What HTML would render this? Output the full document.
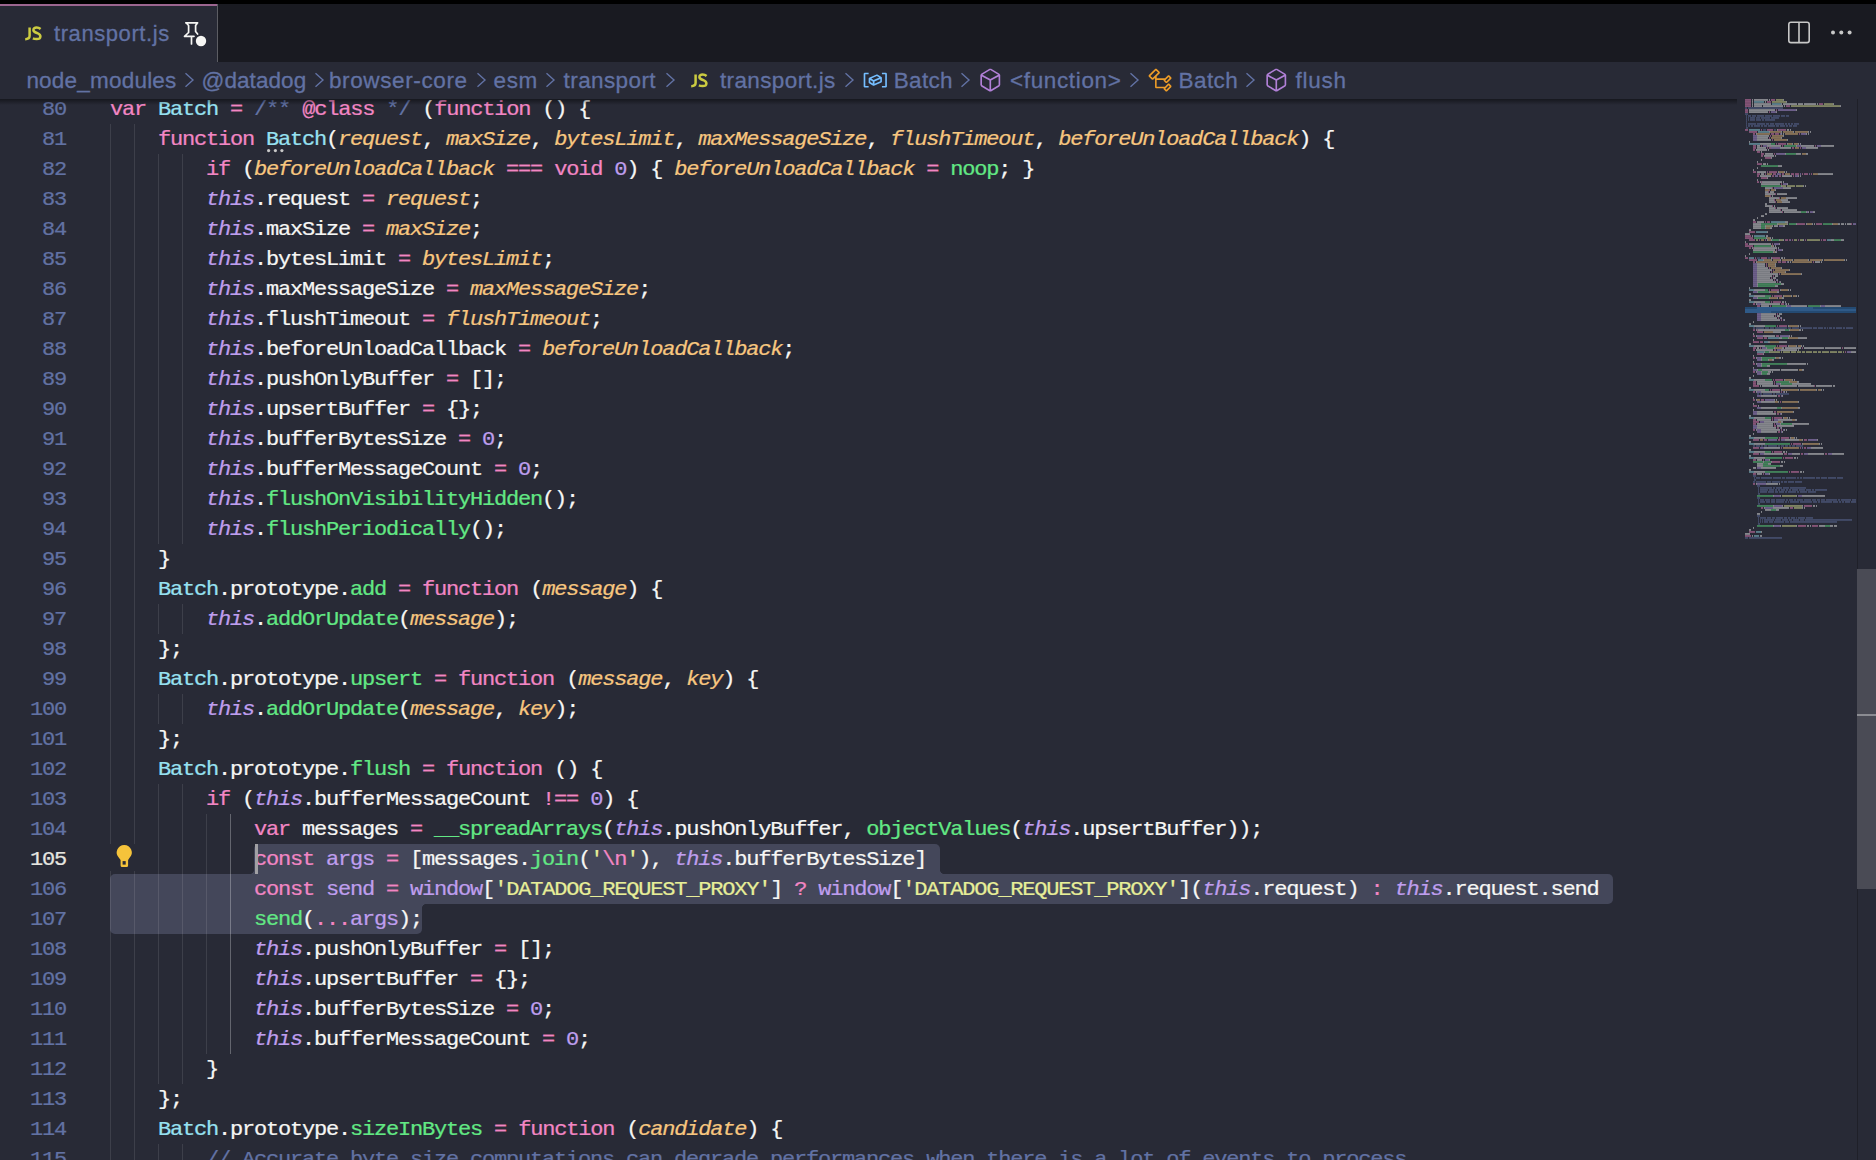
<!DOCTYPE html>
<html><head><meta charset="utf-8"><title>transport.js</title>
<style>
html,body{margin:0;padding:0}
body{width:1876px;height:1160px;overflow:hidden;background:#282A36;position:relative;font-family:"Liberation Sans",sans-serif}
.abs{position:absolute}
#topbar{left:0;top:0;width:1876px;height:4px;background:#000}
#tabs{left:0;top:4px;width:1876px;height:58px;background:#191A21}
#tab{left:0;top:0;width:217px;height:58px;background:#282A36}
#tabborder{left:0;top:0;width:217px;height:2px;background:#9C6690}
#tabsep{left:217px;top:0;width:1px;height:58px;background:#5c5d63}
#tabjs{left:25px;top:20px;font:bold 16px/20px "Liberation Sans",sans-serif;color:#CBCB41;letter-spacing:-0.5px;transform:scaleX(.88);transform-origin:0 0}
#tabname{left:54px;top:14.5px;-webkit-text-stroke:0.3px currentColor;letter-spacing:0.58px;font:22px/30px "Liberation Sans",sans-serif;color:#6272A4;white-space:pre}
#crumbs{left:0;top:62px;width:1876px;height:37px;background:#282A36;z-index:5}
#crumbs .t{position:absolute;top:4px;-webkit-text-stroke:0.3px currentColor;font:22.5px/30px "Liberation Sans",sans-serif;color:#6272A4;white-space:pre}
#shadow{left:0;top:99px;width:1737px;height:6px;background:linear-gradient(rgba(0,0,0,.45),rgba(0,0,0,0));z-index:5}
.ln{-webkit-text-stroke:0.25px currentColor;position:absolute;font:22px/30px "Liberation Mono",monospace;letter-spacing:-1.2px;white-space:pre;color:#F6F6F4;height:30px;z-index:3;transform:translateY(1.2px) scaleY(0.95);transform-origin:0 22.6px}
.num{-webkit-text-stroke:0.25px currentColor;position:absolute;left:0;width:66px;text-align:right;font:22px/30px "Liberation Mono",monospace;letter-spacing:-1.2px;color:#6272A4;z-index:3;transform:translateY(1.2px) scaleY(0.95);transform-origin:0 22.6px}
.num.act{color:#E6E6E0}
.g{position:absolute;width:1px;background:rgba(255,255,255,.1);z-index:2}
.ga{background:rgba(255,255,255,.28)}
.k{color:#F286C4}.c{color:#97E1F1}.p{color:#F7C67F;font-style:italic}.t{color:#BF9EEE;font-style:italic}
.v{color:#BF9EEE}.f{color:#62E884}.s{color:#E7EE98}.m{color:#6272A4}
.sel{position:absolute;background:#44475A;z-index:1}
#minimap{left:1745px;top:99px;width:111px;height:1062px;z-index:1}
#sbline{left:1857px;top:99px;width:1px;height:1062px;background:#1f2029;z-index:4}
#slider{left:1857px;top:569px;width:19px;height:320px;background:#4A4B55;z-index:4}
#cursormark{left:1857px;top:714px;width:19px;height:2px;background:#8b8c92;z-index:4}
</style></head><body>
<div id="topbar" class="abs"></div>
<div id="tabs" class="abs">
  <div id="tab" class="abs">
    <div id="tabborder" class="abs"></div>
    <svg class="abs" style="left:20px;top:15px" width="26" height="26" viewBox="0 0 26 26"><path d="M9.6 8.6 V16.8 C9.6 19.4 8.2 20.2 5.2 20.2" fill="none" stroke="#CBCB41" stroke-width="2.5"/><path d="M20.6 10 C19.4 9 18 8.5 16.6 8.5 C14.6 8.5 13.3 9.5 13.4 11.1 C13.5 12.8 15.4 13.4 17.4 14.2 C19.4 15 20.5 16 20.4 17.7 C20.3 19.4 18.7 20.1 16.6 20.1 C15.2 20.1 13.9 19.9 12.9 19.4" fill="none" stroke="#CBCB41" stroke-width="2.5"/></svg>
    <div id="tabname" class="abs">transport.js</div>
    <svg class="abs" style="left:180px;top:14px" width="30" height="30" viewBox="0 0 30 30">
      <path d="M5.8 4.8 H17.6 M6.3 5 L8.6 7.5 V14.5 L4.5 18.3 H14 M17.4 5 L15.6 7.5 V13.5 L17.6 16 M11.5 18.3 V26" fill="none" stroke="#F6F6F4" stroke-width="1.7" stroke-linejoin="round" stroke-linecap="round"/>
      <circle cx="21" cy="23" r="5.2" fill="#F6F6F4"/>
    </svg>
  </div>
  <div id="tabsep" class="abs"></div>
  <svg class="abs" style="left:1786px;top:14.5px" width="26" height="26" viewBox="0 0 26 26">
    <rect x="2.8" y="3.2" width="20.4" height="20.4" rx="2.2" fill="none" stroke="#C8C8C8" stroke-width="1.6"/>
    <line x1="13" y1="3.2" x2="13" y2="23.6" stroke="#C8C8C8" stroke-width="1.6"/>
  </svg>
  <svg class="abs" style="left:1826px;top:20.2px" width="30" height="16" viewBox="0 0 30 16">
    <circle cx="7" cy="8.6" r="2" fill="#C8C8C8"/><circle cx="15.3" cy="8.6" r="2" fill="#C8C8C8"/><circle cx="23.6" cy="8.6" r="2" fill="#C8C8C8"/>
  </svg>
</div>
<div id="crumbs" class="abs">
<div class="t" style="left:26.4px;letter-spacing:0.21px">node_modules</div>
<svg class="abs" style="left:183px;top:9px" width="12" height="18" viewBox="0 0 12 18"><path d="M2.5 2.2 L10 9 L2.5 15.8" fill="none" stroke="#6272A4" stroke-width="1.4"/></svg>
<div class="t" style="left:201.5px;letter-spacing:0.07px">@datadog</div>
<svg class="abs" style="left:313px;top:9px" width="12" height="18" viewBox="0 0 12 18"><path d="M2.5 2.2 L10 9 L2.5 15.8" fill="none" stroke="#6272A4" stroke-width="1.4"/></svg>
<div class="t" style="left:329.0px;letter-spacing:0.61px">browser-core</div>
<svg class="abs" style="left:475px;top:9px" width="12" height="18" viewBox="0 0 12 18"><path d="M2.5 2.2 L10 9 L2.5 15.8" fill="none" stroke="#6272A4" stroke-width="1.4"/></svg>
<div class="t" style="left:493.5px;letter-spacing:0.65px">esm</div>
<svg class="abs" style="left:544px;top:9px" width="12" height="18" viewBox="0 0 12 18"><path d="M2.5 2.2 L10 9 L2.5 15.8" fill="none" stroke="#6272A4" stroke-width="1.4"/></svg>
<div class="t" style="left:563.6px;letter-spacing:0.40px">transport</div>
<svg class="abs" style="left:664px;top:9px" width="12" height="18" viewBox="0 0 12 18"><path d="M2.5 2.2 L10 9 L2.5 15.8" fill="none" stroke="#6272A4" stroke-width="1.4"/></svg>
<svg class="abs" style="left:686px;top:65.5px;top:3.5px" width="26" height="26" viewBox="0 0 26 26"><path d="M9.6 8.6 V16.8 C9.6 19.4 8.2 20.2 5.2 20.2" fill="none" stroke="#CBCB41" stroke-width="2.5"/><path d="M20.6 10 C19.4 9 18 8.5 16.6 8.5 C14.6 8.5 13.3 9.5 13.4 11.1 C13.5 12.8 15.4 13.4 17.4 14.2 C19.4 15 20.5 16 20.4 17.7 C20.3 19.4 18.7 20.1 16.6 20.1 C15.2 20.1 13.9 19.9 12.9 19.4" fill="none" stroke="#CBCB41" stroke-width="2.5"/></svg>
<div class="t" style="left:720.0px;letter-spacing:0.37px">transport.js</div>
<svg class="abs" style="left:843px;top:9px" width="12" height="18" viewBox="0 0 12 18"><path d="M2.5 2.2 L10 9 L2.5 15.8" fill="none" stroke="#6272A4" stroke-width="1.4"/></svg>
<svg class="abs" style="left:861.7px;top:4.3px" width="26.56" height="26.56" viewBox="0 0 16 16"><path fill="#75BEFF" d="M2 5h2V4H1.5l-.5.5v8l.5.5H4v-1H2V5zm12.5-1H12v1h2v7h-2v1h2.5l.5-.5v-8l-.5-.5zm-2.74 2.57L12 7v2.51l-.3.45-4.5 2h-.46l-2.5-1.5-.24-.43v-2.5l.3-.46 4.5-2h.46l2.5 1.5zM5 9.71l1.5.9V9.28L5 8.38v1.33zm.58-2.15l1.45.87 3.39-1.5-1.45-.87-3.39 1.5zm1.95 3.17l3.5-1.56v-1.4l-3.5 1.55v1.41z"/></svg>
<div class="t" style="left:893.8px;letter-spacing:0.30px">Batch</div>
<svg class="abs" style="left:959px;top:9px" width="12" height="18" viewBox="0 0 12 18"><path d="M2.5 2.2 L10 9 L2.5 15.8" fill="none" stroke="#6272A4" stroke-width="1.4"/></svg>
<svg class="abs" style="left:977.4px;top:4.6px" width="26.56" height="26.56" viewBox="0 0 16 16"><path fill="#B180D7" d="M13.51 4l-5-3h-1l-5 3-.49.86v6l.49.85 5 3h1l5-3 .49-.85v-6L13.51 4zm-6 9.56l-4.5-2.7V5.7l4.5 2.45v5.41zM3.27 4.7l4.74-2.84 4.74 2.84-4.74 2.59L3.27 4.7zm9.74 6.16l-4.5 2.7V8.15l4.5-2.45v5.16z"/></svg>
<div class="t" style="left:1010.0px;letter-spacing:0.64px">&lt;function&gt;</div>
<svg class="abs" style="left:1128px;top:9px" width="12" height="18" viewBox="0 0 12 18"><path d="M2.5 2.2 L10 9 L2.5 15.8" fill="none" stroke="#6272A4" stroke-width="1.4"/></svg>
<svg class="abs" style="left:1147px;top:4.6px" width="26.56" height="26.56" viewBox="0 0 16 16"><path fill="#EE9D28" d="M11.34 9.71h.71l2.67-2.67v-.71L13.38 5h-.7l-1.82 1.81h-5V5.56l1.86-1.85V3l-2-2H5L1 5v.71l2 2h.71l1.14-1.15v5.79l.5.5H10v.52l1.330 1.34h.71l2.67-2.67v-.71L13.37 10h-.7l-1.86 1.85h-5v-4H10v.48l1.34 1.38zm1.69-3.65l.63.63-2 2-.63-.63 2-2zm0 5l.63.63-2 2-.63-.63 2-2zM3.35 6.65l-1.29-1.3 3.290-3.29 1.3 1.29-3.3 3.3z"/></svg>
<div class="t" style="left:1178.5px;letter-spacing:0.45px">Batch</div>
<svg class="abs" style="left:1244px;top:9px" width="12" height="18" viewBox="0 0 12 18"><path d="M2.5 2.2 L10 9 L2.5 15.8" fill="none" stroke="#6272A4" stroke-width="1.4"/></svg>
<svg class="abs" style="left:1262.6px;top:4.6px" width="26.56" height="26.56" viewBox="0 0 16 16"><path fill="#B180D7" d="M13.51 4l-5-3h-1l-5 3-.49.86v6l.49.85 5 3h1l5-3 .49-.85v-6L13.51 4zm-6 9.56l-4.5-2.7V5.7l4.5 2.45v5.41zM3.27 4.7l4.74-2.84 4.74 2.84-4.74 2.59L3.27 4.7zm9.74 6.16l-4.5 2.7V8.15l4.5-2.45v5.16z"/></svg>
<div class="t" style="left:1295.5px;letter-spacing:0.75px">flush</div>
</div>
<div id="shadow" class="abs"></div>

<div class="sel" style="left:254px;top:844px;width:686px;height:30px;border-radius:5px 5px 0 0"></div>
<div class="sel" style="left:110px;top:874px;width:1503px;height:30px;border-radius:5px 5px 5px 0"></div>
<div class="sel" style="left:110px;top:904px;width:312px;height:30px;border-radius:0 0 5px 5px"></div>
<div class="sel" style="left:249px;top:869px;width:5px;height:5px;background:radial-gradient(circle at 0 0,transparent 5px,#44475A 5.5px)"></div>
<div class="sel" style="left:940px;top:869px;width:5px;height:5px;background:radial-gradient(circle at 100% 0,transparent 5px,#44475A 5.5px)"></div>
<div class="sel" style="left:422px;top:904px;width:5px;height:5px;background:radial-gradient(circle at 100% 100%,transparent 5px,#44475A 5.5px)"></div>
<div class="abs" style="left:255px;top:844px;width:3px;height:30px;background:#A0A0A4;z-index:4"></div>
<div class="abs" style="left:110px;top:844px;width:26px;height:27px;background:#282A36;z-index:3"></div>
<svg class="abs" style="left:114px;top:843px;z-index:4" width="20" height="26" viewBox="0 0 20 26">
<path d="M10.25 1.9 A7.6 7.6 0 0 1 15.6 14.8 L14.1 17 V22.5 Q14.1 24 12.6 24 H8.1 Q6.6 24 6.6 22.5 V17 L4.9 14.8 A7.6 7.6 0 0 1 10.25 1.9 Z" fill="#F5C33B"/>
<rect x="8.6" y="18.1" width="3.1" height="3.5" fill="#282A36"/>
</svg>
<svg class="abs" style="left:265px;top:147px;z-index:4" width="20" height="8" viewBox="0 0 20 8"><circle cx="3.6" cy="3.6" r="1.6" fill="#C8C8C8"/><circle cx="10.4" cy="3.6" r="1.6" fill="#C8C8C8"/><circle cx="16.9" cy="3.6" r="1.6" fill="#C8C8C8"/></svg>

<div class="g" style="left:110px;top:124px;height:1050px"></div>
<div class="g" style="left:134px;top:124px;height:1050px"></div>
<div class="g" style="left:158px;top:154px;height:390px"></div>
<div class="g" style="left:158px;top:604px;height:30px"></div>
<div class="g" style="left:158px;top:694px;height:30px"></div>
<div class="g" style="left:158px;top:784px;height:300px"></div>
<div class="g" style="left:158px;top:1144px;height:30px"></div>
<div class="g" style="left:182px;top:154px;height:390px"></div>
<div class="g" style="left:182px;top:604px;height:30px"></div>
<div class="g" style="left:182px;top:694px;height:30px"></div>
<div class="g" style="left:182px;top:784px;height:300px"></div>
<div class="g" style="left:182px;top:1144px;height:30px"></div>
<div class="g" style="left:206px;top:814px;height:240px"></div>
<div class="g ga" style="left:230px;top:814px;height:240px"></div>
<div class="num" style="top:94px">80</div>
<div class="num" style="top:124px">81</div>
<div class="num" style="top:154px">82</div>
<div class="num" style="top:184px">83</div>
<div class="num" style="top:214px">84</div>
<div class="num" style="top:244px">85</div>
<div class="num" style="top:274px">86</div>
<div class="num" style="top:304px">87</div>
<div class="num" style="top:334px">88</div>
<div class="num" style="top:364px">89</div>
<div class="num" style="top:394px">90</div>
<div class="num" style="top:424px">91</div>
<div class="num" style="top:454px">92</div>
<div class="num" style="top:484px">93</div>
<div class="num" style="top:514px">94</div>
<div class="num" style="top:544px">95</div>
<div class="num" style="top:574px">96</div>
<div class="num" style="top:604px">97</div>
<div class="num" style="top:634px">98</div>
<div class="num" style="top:664px">99</div>
<div class="num" style="top:694px">100</div>
<div class="num" style="top:724px">101</div>
<div class="num" style="top:754px">102</div>
<div class="num" style="top:784px">103</div>
<div class="num" style="top:814px">104</div>
<div class="num act" style="top:844px">105</div>
<div class="num" style="top:874px">106</div>
<div class="num" style="top:904px">107</div>
<div class="num" style="top:934px">108</div>
<div class="num" style="top:964px">109</div>
<div class="num" style="top:994px">110</div>
<div class="num" style="top:1024px">111</div>
<div class="num" style="top:1054px">112</div>
<div class="num" style="top:1084px">113</div>
<div class="num" style="top:1114px">114</div>
<div class="num" style="top:1144px">115</div>
<div class="ln" style="top:94px;left:110px"><span class="k">var</span> <span class="c">Batch</span> <span class="k">=</span> <span class="m">/**</span> <span class="k">@class</span> <span class="m">*/</span> (<span class="k">function</span> () {</div>
<div class="ln" style="top:124px;left:158px"><span class="k">function</span> <span class="c">Batch</span>(<span class="p">request</span>, <span class="p">maxSize</span>, <span class="p">bytesLimit</span>, <span class="p">maxMessageSize</span>, <span class="p">flushTimeout</span>, <span class="p">beforeUnloadCallback</span>) {</div>
<div class="ln" style="top:154px;left:206px"><span class="k">if</span> (<span class="p">beforeUnloadCallback</span> <span class="k">===</span> <span class="k">void</span> <span class="v">0</span>) { <span class="p">beforeUnloadCallback</span> <span class="k">=</span> <span class="f">noop</span>; }</div>
<div class="ln" style="top:184px;left:206px"><span class="t">this</span>.request <span class="k">=</span> <span class="p">request</span>;</div>
<div class="ln" style="top:214px;left:206px"><span class="t">this</span>.maxSize <span class="k">=</span> <span class="p">maxSize</span>;</div>
<div class="ln" style="top:244px;left:206px"><span class="t">this</span>.bytesLimit <span class="k">=</span> <span class="p">bytesLimit</span>;</div>
<div class="ln" style="top:274px;left:206px"><span class="t">this</span>.maxMessageSize <span class="k">=</span> <span class="p">maxMessageSize</span>;</div>
<div class="ln" style="top:304px;left:206px"><span class="t">this</span>.flushTimeout <span class="k">=</span> <span class="p">flushTimeout</span>;</div>
<div class="ln" style="top:334px;left:206px"><span class="t">this</span>.beforeUnloadCallback <span class="k">=</span> <span class="p">beforeUnloadCallback</span>;</div>
<div class="ln" style="top:364px;left:206px"><span class="t">this</span>.pushOnlyBuffer <span class="k">=</span> [];</div>
<div class="ln" style="top:394px;left:206px"><span class="t">this</span>.upsertBuffer <span class="k">=</span> {};</div>
<div class="ln" style="top:424px;left:206px"><span class="t">this</span>.bufferBytesSize <span class="k">=</span> <span class="v">0</span>;</div>
<div class="ln" style="top:454px;left:206px"><span class="t">this</span>.bufferMessageCount <span class="k">=</span> <span class="v">0</span>;</div>
<div class="ln" style="top:484px;left:206px"><span class="t">this</span>.<span class="f">flushOnVisibilityHidden</span>();</div>
<div class="ln" style="top:514px;left:206px"><span class="t">this</span>.<span class="f">flushPeriodically</span>();</div>
<div class="ln" style="top:544px;left:158px">}</div>
<div class="ln" style="top:574px;left:158px"><span class="c">Batch</span>.prototype.<span class="f">add</span> <span class="k">=</span> <span class="k">function</span> (<span class="p">message</span>) {</div>
<div class="ln" style="top:604px;left:206px"><span class="t">this</span>.<span class="f">addOrUpdate</span>(<span class="p">message</span>);</div>
<div class="ln" style="top:634px;left:158px">};</div>
<div class="ln" style="top:664px;left:158px"><span class="c">Batch</span>.prototype.<span class="f">upsert</span> <span class="k">=</span> <span class="k">function</span> (<span class="p">message</span>, <span class="p">key</span>) {</div>
<div class="ln" style="top:694px;left:206px"><span class="t">this</span>.<span class="f">addOrUpdate</span>(<span class="p">message</span>, <span class="p">key</span>);</div>
<div class="ln" style="top:724px;left:158px">};</div>
<div class="ln" style="top:754px;left:158px"><span class="c">Batch</span>.prototype.<span class="f">flush</span> <span class="k">=</span> <span class="k">function</span> () {</div>
<div class="ln" style="top:784px;left:206px"><span class="k">if</span> (<span class="t">this</span>.bufferMessageCount <span class="k">!==</span> <span class="v">0</span>) {</div>
<div class="ln" style="top:814px;left:254px"><span class="k">var</span> messages <span class="k">=</span> <span class="f">__spreadArrays</span>(<span class="t">this</span>.pushOnlyBuffer, <span class="f">objectValues</span>(<span class="t">this</span>.upsertBuffer));</div>
<div class="ln" style="top:844px;left:254px"><span class="k">const</span> <span class="v">args</span> <span class="k">=</span> [messages.<span class="f">join</span>(<span class="s">&#x27;</span><span class="k">\n</span><span class="s">&#x27;</span>), <span class="t">this</span>.bufferBytesSize]</div>
<div class="ln" style="top:874px;left:254px"><span class="k">const</span> <span class="v">send</span> <span class="k">=</span> <span class="v">window</span>[<span class="s">&#x27;DATADOG_REQUEST_PROXY&#x27;</span>] <span class="k">?</span> <span class="v">window</span>[<span class="s">&#x27;DATADOG_REQUEST_PROXY&#x27;</span>](<span class="t">this</span>.request) <span class="k">:</span> <span class="t">this</span>.request.send</div>
<div class="ln" style="top:904px;left:254px"><span class="f">send</span>(<span class="k">...</span><span class="v">args</span>);</div>
<div class="ln" style="top:934px;left:254px"><span class="t">this</span>.pushOnlyBuffer <span class="k">=</span> [];</div>
<div class="ln" style="top:964px;left:254px"><span class="t">this</span>.upsertBuffer <span class="k">=</span> {};</div>
<div class="ln" style="top:994px;left:254px"><span class="t">this</span>.bufferBytesSize <span class="k">=</span> <span class="v">0</span>;</div>
<div class="ln" style="top:1024px;left:254px"><span class="t">this</span>.bufferMessageCount <span class="k">=</span> <span class="v">0</span>;</div>
<div class="ln" style="top:1054px;left:206px">}</div>
<div class="ln" style="top:1084px;left:158px">};</div>
<div class="ln" style="top:1114px;left:158px"><span class="c">Batch</span>.prototype.<span class="f">sizeInBytes</span> <span class="k">=</span> <span class="k">function</span> (<span class="p">candidate</span>) {</div>
<div class="ln" style="top:1144px;left:206px"><span class="m">// Accurate byte size computations can degrade performances when there is a lot of events to process</span></div>
<div id="minimap" class="abs"><svg width="111" height="1062" viewBox="0 0 111 1062" style="position:absolute;left:0;top:0"><g opacity="0.5"><rect x="0" y="0.1" width="6" height="1.7" fill="#F286C4"/><rect x="7" y="0.1" width="1" height="1.7" fill="#F6F6F4"/><rect x="9" y="0.1" width="14" height="1.7" fill="#F6F6F4"/><rect x="24" y="0.1" width="1" height="1.7" fill="#F6F6F4"/><rect x="26" y="0.1" width="4" height="1.7" fill="#F286C4"/><rect x="31" y="0.1" width="7" height="1.7" fill="#E7EE98"/><rect x="38" y="0.1" width="1" height="1.7" fill="#F6F6F4"/><rect x="0" y="2.1" width="6" height="1.7" fill="#F286C4"/><rect x="7" y="2.1" width="1" height="1.7" fill="#F6F6F4"/><rect x="9" y="2.1" width="10" height="1.7" fill="#97E1F1"/><rect x="20" y="2.1" width="1" height="1.7" fill="#F6F6F4"/><rect x="22" y="2.1" width="4" height="1.7" fill="#F286C4"/><rect x="27" y="2.1" width="14" height="1.7" fill="#E7EE98"/><rect x="41" y="2.1" width="1" height="1.7" fill="#F6F6F4"/><rect x="0" y="4.2" width="6" height="1.7" fill="#F286C4"/><rect x="7" y="4.2" width="1" height="1.7" fill="#F6F6F4"/><rect x="9" y="4.2" width="17" height="1.7" fill="#F6F6F4"/><rect x="27" y="4.2" width="9" height="1.7" fill="#97E1F1"/><rect x="36" y="4.2" width="1" height="1.7" fill="#F6F6F4"/><rect x="38" y="4.2" width="14" height="1.7" fill="#F6F6F4"/><rect x="53" y="4.2" width="5" height="1.7" fill="#F6F6F4"/><rect x="59" y="4.2" width="12" height="1.7" fill="#F6F6F4"/><rect x="72" y="4.2" width="1" height="1.7" fill="#F6F6F4"/><rect x="74" y="4.2" width="4" height="1.7" fill="#F286C4"/><rect x="79" y="4.2" width="9" height="1.7" fill="#E7EE98"/><rect x="88" y="4.2" width="1" height="1.7" fill="#F6F6F4"/><rect x="0" y="6.2" width="6" height="1.7" fill="#F286C4"/><rect x="7" y="6.2" width="1" height="1.7" fill="#F6F6F4"/><rect x="9" y="6.2" width="8" height="1.7" fill="#F6F6F4"/><rect x="18" y="6.2" width="20" height="1.7" fill="#F6F6F4"/><rect x="39" y="6.2" width="1" height="1.7" fill="#F6F6F4"/><rect x="41" y="6.2" width="4" height="1.7" fill="#F286C4"/><rect x="46" y="6.2" width="49" height="1.7" fill="#E7EE98"/><rect x="95" y="6.2" width="1" height="1.7" fill="#F6F6F4"/><rect x="0" y="8.2" width="2" height="1.7" fill="#6272A4"/><rect x="3" y="8.2" width="35" height="1.7" fill="#6272A4"/><rect x="0" y="10.2" width="3" height="1.7" fill="#F286C4"/><rect x="4" y="10.2" width="26" height="1.7" fill="#F6F6F4"/><rect x="31" y="10.2" width="1" height="1.7" fill="#F286C4"/><rect x="33" y="10.2" width="18" height="1.7" fill="#BF9EEE"/><rect x="51" y="10.2" width="1" height="1.7" fill="#F6F6F4"/><rect x="0" y="12.2" width="3" height="1.7" fill="#F286C4"/><rect x="4" y="12.2" width="19" height="1.7" fill="#F6F6F4"/><rect x="24" y="12.2" width="1" height="1.7" fill="#F286C4"/><rect x="26" y="12.2" width="5" height="1.7" fill="#BF9EEE"/><rect x="31" y="12.2" width="1" height="1.7" fill="#F6F6F4"/><rect x="0" y="14.2" width="3" height="1.7" fill="#6272A4"/><rect x="1" y="16.1" width="1" height="1.7" fill="#6272A4"/><rect x="3" y="16.1" width="3" height="1.7" fill="#6272A4"/><rect x="7" y="16.1" width="4" height="1.7" fill="#6272A4"/><rect x="12" y="16.1" width="7" height="1.7" fill="#6272A4"/><rect x="20" y="16.1" width="7" height="1.7" fill="#6272A4"/><rect x="28" y="16.1" width="7" height="1.7" fill="#6272A4"/><rect x="36" y="16.1" width="4" height="1.7" fill="#6272A4"/><rect x="41" y="16.1" width="3" height="1.7" fill="#6272A4"/><rect x="1" y="18.1" width="1" height="1.7" fill="#6272A4"/><rect x="3" y="18.1" width="1" height="1.7" fill="#6272A4"/><rect x="5" y="18.1" width="5" height="1.7" fill="#6272A4"/><rect x="11" y="18.1" width="4" height="1.7" fill="#6272A4"/><rect x="16" y="18.1" width="9" height="1.7" fill="#6272A4"/><rect x="26" y="18.1" width="8" height="1.7" fill="#6272A4"/><rect x="1" y="20.1" width="1" height="1.7" fill="#6272A4"/><rect x="3" y="20.1" width="1" height="1.7" fill="#6272A4"/><rect x="5" y="20.1" width="5" height="1.7" fill="#6272A4"/><rect x="11" y="20.1" width="5" height="1.7" fill="#6272A4"/><rect x="17" y="20.1" width="2" height="1.7" fill="#6272A4"/><rect x="20" y="20.1" width="10" height="1.7" fill="#6272A4"/><rect x="1" y="22.1" width="1" height="1.7" fill="#6272A4"/><rect x="1" y="24.1" width="1" height="1.7" fill="#6272A4"/><rect x="3" y="24.1" width="8" height="1.7" fill="#6272A4"/><rect x="12" y="24.1" width="8" height="1.7" fill="#6272A4"/><rect x="21" y="24.1" width="3" height="1.7" fill="#6272A4"/><rect x="25" y="24.1" width="4" height="1.7" fill="#6272A4"/><rect x="30" y="24.1" width="9" height="1.7" fill="#6272A4"/><rect x="40" y="24.1" width="2" height="1.7" fill="#6272A4"/><rect x="43" y="24.1" width="2" height="1.7" fill="#6272A4"/><rect x="46" y="24.1" width="2" height="1.7" fill="#6272A4"/><rect x="49" y="24.1" width="5" height="1.7" fill="#6272A4"/><rect x="1" y="26.1" width="1" height="1.7" fill="#6272A4"/><rect x="3" y="26.1" width="2" height="1.7" fill="#6272A4"/><rect x="6" y="26.1" width="2" height="1.7" fill="#6272A4"/><rect x="9" y="26.1" width="6" height="1.7" fill="#6272A4"/><rect x="16" y="26.1" width="2" height="1.7" fill="#6272A4"/><rect x="19" y="26.1" width="3" height="1.7" fill="#6272A4"/><rect x="23" y="26.1" width="7" height="1.7" fill="#6272A4"/><rect x="31" y="26.1" width="3" height="1.7" fill="#6272A4"/><rect x="35" y="26.1" width="5" height="1.7" fill="#6272A4"/><rect x="41" y="26.1" width="2" height="1.7" fill="#6272A4"/><rect x="44" y="26.1" width="3" height="1.7" fill="#6272A4"/><rect x="48" y="26.1" width="4" height="1.7" fill="#6272A4"/><rect x="1" y="28.1" width="2" height="1.7" fill="#6272A4"/><rect x="0" y="30.1" width="3" height="1.7" fill="#F286C4"/><rect x="4" y="30.1" width="11" height="1.7" fill="#97E1F1"/><rect x="16" y="30.1" width="1" height="1.7" fill="#F286C4"/><rect x="18" y="30.1" width="3" height="1.7" fill="#6272A4"/><rect x="22" y="30.1" width="6" height="1.7" fill="#F286C4"/><rect x="29" y="30.1" width="2" height="1.7" fill="#6272A4"/><rect x="32" y="30.1" width="1" height="1.7" fill="#F6F6F4"/><rect x="33" y="30.1" width="8" height="1.7" fill="#F286C4"/><rect x="42" y="30.1" width="2" height="1.7" fill="#F6F6F4"/><rect x="45" y="30.1" width="1" height="1.7" fill="#F6F6F4"/><rect x="4" y="32.1" width="8" height="1.7" fill="#F286C4"/><rect x="13" y="32.1" width="11" height="1.7" fill="#97E1F1"/><rect x="24" y="32.1" width="1" height="1.7" fill="#F6F6F4"/><rect x="25" y="32.1" width="11" height="1.7" fill="#F7C67F"/><rect x="36" y="32.1" width="1" height="1.7" fill="#F6F6F4"/><rect x="38" y="32.1" width="10" height="1.7" fill="#F7C67F"/><rect x="48" y="32.1" width="1" height="1.7" fill="#F6F6F4"/><rect x="50" y="32.1" width="13" height="1.7" fill="#F7C67F"/><rect x="63" y="32.1" width="1" height="1.7" fill="#F6F6F4"/><rect x="65" y="32.1" width="1" height="1.7" fill="#F6F6F4"/><rect x="8" y="34.1" width="2" height="1.7" fill="#F286C4"/><rect x="11" y="34.1" width="1" height="1.7" fill="#F6F6F4"/><rect x="12" y="34.1" width="13" height="1.7" fill="#F7C67F"/><rect x="26" y="34.1" width="3" height="1.7" fill="#F286C4"/><rect x="30" y="34.1" width="4" height="1.7" fill="#F286C4"/><rect x="35" y="34.1" width="1" height="1.7" fill="#BF9EEE"/><rect x="36" y="34.1" width="1" height="1.7" fill="#F6F6F4"/><rect x="38" y="34.1" width="1" height="1.7" fill="#F6F6F4"/><rect x="40" y="34.1" width="13" height="1.7" fill="#F7C67F"/><rect x="54" y="34.1" width="1" height="1.7" fill="#F286C4"/><rect x="56" y="34.1" width="5" height="1.7" fill="#BF9EEE"/><rect x="61" y="34.1" width="1" height="1.7" fill="#F6F6F4"/><rect x="63" y="34.1" width="1" height="1.7" fill="#F6F6F4"/><rect x="8" y="36.1" width="4" height="1.7" fill="#BF9EEE"/><rect x="12" y="36.1" width="12" height="1.7" fill="#F6F6F4"/><rect x="25" y="36.1" width="1" height="1.7" fill="#F286C4"/><rect x="27" y="36.1" width="11" height="1.7" fill="#F7C67F"/><rect x="38" y="36.1" width="1" height="1.7" fill="#F6F6F4"/><rect x="8" y="38.1" width="4" height="1.7" fill="#BF9EEE"/><rect x="12" y="38.1" width="11" height="1.7" fill="#F6F6F4"/><rect x="24" y="38.1" width="1" height="1.7" fill="#F286C4"/><rect x="26" y="38.1" width="10" height="1.7" fill="#F7C67F"/><rect x="36" y="38.1" width="1" height="1.7" fill="#F6F6F4"/><rect x="8" y="40.1" width="4" height="1.7" fill="#BF9EEE"/><rect x="12" y="40.1" width="14" height="1.7" fill="#F6F6F4"/><rect x="27" y="40.1" width="1" height="1.7" fill="#F286C4"/><rect x="29" y="40.1" width="13" height="1.7" fill="#F7C67F"/><rect x="42" y="40.1" width="1" height="1.7" fill="#F6F6F4"/><rect x="4" y="42.1" width="1" height="1.7" fill="#F6F6F4"/><rect x="4" y="44.1" width="11" height="1.7" fill="#97E1F1"/><rect x="15" y="44.1" width="11" height="1.7" fill="#F6F6F4"/><rect x="26" y="44.1" width="4" height="1.7" fill="#62E884"/><rect x="31" y="44.1" width="1" height="1.7" fill="#F286C4"/><rect x="33" y="44.1" width="8" height="1.7" fill="#F286C4"/><rect x="42" y="44.1" width="1" height="1.7" fill="#F6F6F4"/><rect x="43" y="44.1" width="4" height="1.7" fill="#F7C67F"/><rect x="47" y="44.1" width="1" height="1.7" fill="#F6F6F4"/><rect x="49" y="44.1" width="4" height="1.7" fill="#F7C67F"/><rect x="53" y="44.1" width="1" height="1.7" fill="#F6F6F4"/><rect x="55" y="44.1" width="1" height="1.7" fill="#F6F6F4"/><rect x="8" y="46.1" width="3" height="1.7" fill="#F286C4"/><rect x="12" y="46.1" width="3" height="1.7" fill="#F6F6F4"/><rect x="16" y="46.1" width="1" height="1.7" fill="#F286C4"/><rect x="18" y="46.1" width="4" height="1.7" fill="#BF9EEE"/><rect x="22" y="46.1" width="14" height="1.7" fill="#F6F6F4"/><rect x="37" y="46.1" width="1" height="1.7" fill="#F286C4"/><rect x="39" y="46.1" width="12" height="1.7" fill="#62E884"/><rect x="51" y="46.1" width="1" height="1.7" fill="#F6F6F4"/><rect x="52" y="46.1" width="4" height="1.7" fill="#BF9EEE"/><rect x="56" y="46.1" width="13" height="1.7" fill="#F6F6F4"/><rect x="70" y="46.1" width="1" height="1.7" fill="#F286C4"/><rect x="72" y="46.1" width="4" height="1.7" fill="#BF9EEE"/><rect x="76" y="46.1" width="13" height="1.7" fill="#F6F6F4"/><rect x="8" y="48.1" width="3" height="1.7" fill="#F286C4"/><rect x="12" y="48.1" width="9" height="1.7" fill="#F6F6F4"/><rect x="22" y="48.1" width="1" height="1.7" fill="#F286C4"/><rect x="24" y="48.1" width="2" height="1.7" fill="#F286C4"/><rect x="26" y="48.1" width="9" height="1.7" fill="#BF9EEE"/><rect x="35" y="48.1" width="11" height="1.7" fill="#F6F6F4"/><rect x="47" y="48.1" width="2" height="1.7" fill="#F286C4"/><rect x="50" y="48.1" width="4" height="1.7" fill="#F7C67F"/><rect x="55" y="48.1" width="1" height="1.7" fill="#F286C4"/><rect x="57" y="48.1" width="4" height="1.7" fill="#BF9EEE"/><rect x="61" y="48.1" width="12" height="1.7" fill="#F6F6F4"/><rect x="8" y="50.1" width="2" height="1.7" fill="#F286C4"/><rect x="11" y="50.1" width="11" height="1.7" fill="#F6F6F4"/><rect x="23" y="50.1" width="1" height="1.7" fill="#F6F6F4"/><rect x="12" y="52.1" width="3" height="1.7" fill="#F286C4"/><rect x="16" y="52.1" width="1" height="1.7" fill="#F6F6F4"/><rect x="16" y="54.1" width="3" height="1.7" fill="#F286C4"/><rect x="20" y="54.1" width="8" height="1.7" fill="#F6F6F4"/><rect x="29" y="54.1" width="1" height="1.7" fill="#F286C4"/><rect x="31" y="54.1" width="9" height="1.7" fill="#BF9EEE"/><rect x="40" y="54.1" width="1" height="1.7" fill="#F6F6F4"/><rect x="41" y="54.1" width="10" height="1.7" fill="#62E884"/><rect x="51" y="54.1" width="5" height="1.7" fill="#F6F6F4"/><rect x="57" y="54.1" width="4" height="1.7" fill="#F7C67F"/><rect x="61" y="54.1" width="2" height="1.7" fill="#F6F6F4"/><rect x="16" y="56.1" width="2" height="1.7" fill="#F286C4"/><rect x="19" y="56.1" width="10" height="1.7" fill="#F6F6F4"/><rect x="30" y="56.1" width="1" height="1.7" fill="#F6F6F4"/><rect x="20" y="58.1" width="6" height="1.7" fill="#F286C4"/><rect x="26" y="58.1" width="1" height="1.7" fill="#F6F6F4"/><rect x="16" y="60.1" width="1" height="1.7" fill="#F6F6F4"/><rect x="12" y="62.1" width="1" height="1.7" fill="#F6F6F4"/><rect x="12" y="64.2" width="5" height="1.7" fill="#F286C4"/><rect x="18" y="64.2" width="3" height="1.7" fill="#F6F6F4"/><rect x="22" y="64.2" width="1" height="1.7" fill="#F6F6F4"/><rect x="16" y="66.2" width="17" height="1.7" fill="#62E884"/><rect x="33" y="66.2" width="4" height="1.7" fill="#F6F6F4"/><rect x="12" y="68.2" width="1" height="1.7" fill="#F6F6F4"/><rect x="8" y="70.2" width="1" height="1.7" fill="#F6F6F4"/><rect x="8" y="72.2" width="3" height="1.7" fill="#F286C4"/><rect x="12" y="72.2" width="9" height="1.7" fill="#F6F6F4"/><rect x="22" y="72.2" width="1" height="1.7" fill="#F286C4"/><rect x="24" y="72.2" width="8" height="1.7" fill="#F286C4"/><rect x="33" y="72.2" width="1" height="1.7" fill="#F6F6F4"/><rect x="34" y="72.2" width="5" height="1.7" fill="#F7C67F"/><rect x="39" y="72.2" width="1" height="1.7" fill="#F6F6F4"/><rect x="41" y="72.2" width="1" height="1.7" fill="#F6F6F4"/><rect x="12" y="74.2" width="3" height="1.7" fill="#F286C4"/><rect x="16" y="74.2" width="3" height="1.7" fill="#F6F6F4"/><rect x="20" y="74.2" width="1" height="1.7" fill="#F286C4"/><rect x="22" y="74.2" width="5" height="1.7" fill="#F7C67F"/><rect x="28" y="74.2" width="3" height="1.7" fill="#F286C4"/><rect x="32" y="74.2" width="4" height="1.7" fill="#BF9EEE"/><rect x="37" y="74.2" width="2" height="1.7" fill="#F286C4"/><rect x="40" y="74.2" width="5" height="1.7" fill="#F7C67F"/><rect x="46" y="74.2" width="3" height="1.7" fill="#F286C4"/><rect x="50" y="74.2" width="4" height="1.7" fill="#F286C4"/><rect x="55" y="74.2" width="1" height="1.7" fill="#BF9EEE"/><rect x="57" y="74.2" width="1" height="1.7" fill="#F286C4"/><rect x="59" y="74.2" width="4" height="1.7" fill="#F286C4"/><rect x="64" y="74.2" width="1" height="1.7" fill="#BF9EEE"/><rect x="66" y="74.2" width="1" height="1.7" fill="#F286C4"/><rect x="68" y="74.2" width="5" height="1.7" fill="#F7C67F"/><rect x="73" y="74.2" width="15" height="1.7" fill="#F6F6F4"/><rect x="12" y="76.2" width="2" height="1.7" fill="#F286C4"/><rect x="15" y="76.2" width="11" height="1.7" fill="#F6F6F4"/><rect x="27" y="76.2" width="2" height="1.7" fill="#F286C4"/><rect x="30" y="76.2" width="3" height="1.7" fill="#BF9EEE"/><rect x="34" y="76.2" width="2" height="1.7" fill="#F286C4"/><rect x="37" y="76.2" width="10" height="1.7" fill="#F6F6F4"/><rect x="48" y="76.2" width="1" height="1.7" fill="#F286C4"/><rect x="50" y="76.2" width="3" height="1.7" fill="#BF9EEE"/><rect x="53" y="76.2" width="1" height="1.7" fill="#F6F6F4"/><rect x="55" y="76.2" width="1" height="1.7" fill="#F6F6F4"/><rect x="16" y="78.2" width="6" height="1.7" fill="#F286C4"/><rect x="22" y="78.2" width="1" height="1.7" fill="#F6F6F4"/><rect x="12" y="80.2" width="1" height="1.7" fill="#F6F6F4"/><rect x="12" y="82.2" width="2" height="1.7" fill="#F286C4"/><rect x="15" y="82.2" width="1" height="1.7" fill="#F6F6F4"/><rect x="16" y="82.2" width="1" height="1.7" fill="#F286C4"/><rect x="17" y="82.2" width="20" height="1.7" fill="#F6F6F4"/><rect x="38" y="82.2" width="1" height="1.7" fill="#F6F6F4"/><rect x="16" y="84.2" width="19" height="1.7" fill="#F6F6F4"/><rect x="36" y="84.2" width="1" height="1.7" fill="#F286C4"/><rect x="38" y="84.2" width="4" height="1.7" fill="#BF9EEE"/><rect x="42" y="84.2" width="1" height="1.7" fill="#F6F6F4"/><rect x="16" y="86.2" width="20" height="1.7" fill="#62E884"/><rect x="36" y="86.2" width="1" height="1.7" fill="#F6F6F4"/><rect x="37" y="86.2" width="4" height="1.7" fill="#E7EE98"/><rect x="42" y="86.2" width="8" height="1.7" fill="#E7EE98"/><rect x="51" y="86.2" width="7" height="1.7" fill="#E7EE98"/><rect x="58" y="86.2" width="1" height="1.7" fill="#F6F6F4"/><rect x="60" y="86.2" width="1" height="1.7" fill="#F6F6F4"/><rect x="20" y="88.2" width="7" height="1.7" fill="#F6F6F4"/><rect x="27" y="88.2" width="1" height="1.7" fill="#F286C4"/><rect x="29" y="88.2" width="9" height="1.7" fill="#BF9EEE"/><rect x="38" y="88.2" width="8" height="1.7" fill="#F6F6F4"/><rect x="20" y="90.2" width="4" height="1.7" fill="#F7C67F"/><rect x="24" y="90.2" width="1" height="1.7" fill="#F286C4"/><rect x="26" y="90.2" width="4" height="1.7" fill="#F7C67F"/><rect x="30" y="90.2" width="1" height="1.7" fill="#F6F6F4"/><rect x="20" y="92.2" width="3" height="1.7" fill="#F6F6F4"/><rect x="23" y="92.2" width="1" height="1.7" fill="#F286C4"/><rect x="25" y="92.2" width="4" height="1.7" fill="#F6F6F4"/><rect x="20" y="94.2" width="10" height="1.7" fill="#F6F6F4"/><rect x="30" y="94.2" width="1" height="1.7" fill="#F286C4"/><rect x="32" y="94.2" width="10" height="1.7" fill="#F6F6F4"/><rect x="20" y="96.2" width="5" height="1.7" fill="#F7C67F"/><rect x="25" y="96.2" width="1" height="1.7" fill="#F286C4"/><rect x="27" y="96.2" width="1" height="1.7" fill="#F6F6F4"/><rect x="24" y="98.2" width="10" height="1.7" fill="#F6F6F4"/><rect x="34" y="98.2" width="1" height="1.7" fill="#F286C4"/><rect x="36" y="98.2" width="5" height="1.7" fill="#F7C67F"/><rect x="41" y="98.2" width="11" height="1.7" fill="#F6F6F4"/><rect x="24" y="100.2" width="5" height="1.7" fill="#F6F6F4"/><rect x="29" y="100.2" width="1" height="1.7" fill="#F286C4"/><rect x="31" y="100.2" width="5" height="1.7" fill="#F7C67F"/><rect x="36" y="100.2" width="7" height="1.7" fill="#F6F6F4"/><rect x="24" y="102.2" width="6" height="1.7" fill="#F6F6F4"/><rect x="30" y="102.2" width="1" height="1.7" fill="#F286C4"/><rect x="32" y="102.2" width="5" height="1.7" fill="#F7C67F"/><rect x="37" y="102.2" width="8" height="1.7" fill="#F6F6F4"/><rect x="20" y="104.2" width="2" height="1.7" fill="#F6F6F4"/><rect x="20" y="106.2" width="7" height="1.7" fill="#F6F6F4"/><rect x="27" y="106.2" width="1" height="1.7" fill="#F286C4"/><rect x="29" y="106.2" width="1" height="1.7" fill="#F6F6F4"/><rect x="24" y="108.2" width="6" height="1.7" fill="#F6F6F4"/><rect x="30" y="108.2" width="1" height="1.7" fill="#F286C4"/><rect x="32" y="108.2" width="11" height="1.7" fill="#F6F6F4"/><rect x="24" y="110.2" width="11" height="1.7" fill="#F6F6F4"/><rect x="35" y="110.2" width="1" height="1.7" fill="#F286C4"/><rect x="37" y="110.2" width="15" height="1.7" fill="#F6F6F4"/><rect x="24" y="112.2" width="13" height="1.7" fill="#F6F6F4"/><rect x="37" y="112.2" width="1" height="1.7" fill="#F286C4"/><rect x="39" y="112.2" width="17" height="1.7" fill="#F6F6F4"/><rect x="56" y="112.2" width="5" height="1.7" fill="#62E884"/><rect x="61" y="112.2" width="1" height="1.7" fill="#F6F6F4"/><rect x="62" y="112.2" width="1" height="1.7" fill="#BF9EEE"/><rect x="63" y="112.2" width="1" height="1.7" fill="#F6F6F4"/><rect x="65" y="112.2" width="3" height="1.7" fill="#BF9EEE"/><rect x="68" y="112.2" width="2" height="1.7" fill="#F6F6F4"/><rect x="20" y="114.2" width="2" height="1.7" fill="#F6F6F4"/><rect x="16" y="116.2" width="3" height="1.7" fill="#F6F6F4"/><rect x="12" y="118.2" width="1" height="1.7" fill="#F6F6F4"/><rect x="8" y="120.2" width="2" height="1.7" fill="#F6F6F4"/><rect x="8" y="122.2" width="3" height="1.7" fill="#F286C4"/><rect x="12" y="122.2" width="7" height="1.7" fill="#F6F6F4"/><rect x="20" y="122.2" width="1" height="1.7" fill="#F286C4"/><rect x="22" y="122.2" width="3" height="1.7" fill="#F286C4"/><rect x="26" y="122.2" width="14" height="1.7" fill="#97E1F1"/><rect x="40" y="122.2" width="3" height="1.7" fill="#F6F6F4"/><rect x="8" y="124.2" width="8" height="1.7" fill="#F6F6F4"/><rect x="16" y="124.2" width="16" height="1.7" fill="#62E884"/><rect x="32" y="124.2" width="1" height="1.7" fill="#F6F6F4"/><rect x="33" y="124.2" width="9" height="1.7" fill="#E7EE98"/><rect x="42" y="124.2" width="1" height="1.7" fill="#F6F6F4"/><rect x="44" y="124.2" width="7" height="1.7" fill="#62E884"/><rect x="51" y="124.2" width="1" height="1.7" fill="#F6F6F4"/><rect x="52" y="124.2" width="8" height="1.7" fill="#F286C4"/><rect x="61" y="124.2" width="1" height="1.7" fill="#F6F6F4"/><rect x="62" y="124.2" width="5" height="1.7" fill="#F7C67F"/><rect x="67" y="124.2" width="1" height="1.7" fill="#F6F6F4"/><rect x="69" y="124.2" width="1" height="1.7" fill="#F6F6F4"/><rect x="71" y="124.2" width="6" height="1.7" fill="#F286C4"/><rect x="78" y="124.2" width="9" height="1.7" fill="#62E884"/><rect x="87" y="124.2" width="1" height="1.7" fill="#F6F6F4"/><rect x="88" y="124.2" width="5" height="1.7" fill="#F7C67F"/><rect x="93" y="124.2" width="2" height="1.7" fill="#F6F6F4"/><rect x="96" y="124.2" width="3" height="1.7" fill="#F6F6F4"/><rect x="100" y="124.2" width="1" height="1.7" fill="#F6F6F4"/><rect x="102" y="124.2" width="4" height="1.7" fill="#F6F6F4"/><rect x="106" y="124.2" width="1" height="1.7" fill="#F286C4"/><rect x="108" y="124.2" width="3" height="1.7" fill="#BF9EEE"/><rect x="8" y="126.2" width="8" height="1.7" fill="#F6F6F4"/><rect x="16" y="126.2" width="4" height="1.7" fill="#62E884"/><rect x="20" y="126.2" width="1" height="1.7" fill="#F6F6F4"/><rect x="21" y="126.2" width="6" height="1.7" fill="#E7EE98"/><rect x="27" y="126.2" width="1" height="1.7" fill="#F6F6F4"/><rect x="29" y="126.2" width="4" height="1.7" fill="#F6F6F4"/><rect x="34" y="126.2" width="4" height="1.7" fill="#BF9EEE"/><rect x="38" y="126.2" width="2" height="1.7" fill="#F6F6F4"/><rect x="8" y="128.2" width="8" height="1.7" fill="#F6F6F4"/><rect x="16" y="128.2" width="4" height="1.7" fill="#62E884"/><rect x="20" y="128.2" width="1" height="1.7" fill="#F6F6F4"/><rect x="21" y="128.2" width="4" height="1.7" fill="#F7C67F"/><rect x="25" y="128.2" width="2" height="1.7" fill="#F6F6F4"/><rect x="4" y="130.2" width="2" height="1.7" fill="#F6F6F4"/><rect x="4" y="132.2" width="6" height="1.7" fill="#F286C4"/><rect x="11" y="132.2" width="11" height="1.7" fill="#97E1F1"/><rect x="22" y="132.2" width="1" height="1.7" fill="#F6F6F4"/><rect x="0" y="134.2" width="5" height="1.7" fill="#F6F6F4"/><rect x="0" y="136.2" width="6" height="1.7" fill="#F286C4"/><rect x="7" y="136.2" width="1" height="1.7" fill="#F6F6F4"/><rect x="9" y="136.2" width="11" height="1.7" fill="#97E1F1"/><rect x="21" y="136.2" width="2" height="1.7" fill="#F6F6F4"/><rect x="0" y="138.2" width="8" height="1.7" fill="#F286C4"/><rect x="9" y="138.2" width="12" height="1.7" fill="#62E884"/><rect x="21" y="138.2" width="1" height="1.7" fill="#F6F6F4"/><rect x="22" y="138.2" width="3" height="1.7" fill="#F7C67F"/><rect x="25" y="138.2" width="1" height="1.7" fill="#F6F6F4"/><rect x="27" y="138.2" width="1" height="1.7" fill="#F6F6F4"/><rect x="4" y="140.2" width="6" height="1.7" fill="#F286C4"/><rect x="11" y="140.2" width="2" height="1.7" fill="#E7EE98"/><rect x="14" y="140.2" width="1" height="1.7" fill="#F286C4"/><rect x="16" y="140.2" width="3" height="1.7" fill="#F7C67F"/><rect x="20" y="140.2" width="1" height="1.7" fill="#F286C4"/><rect x="22" y="140.2" width="1" height="1.7" fill="#F6F6F4"/><rect x="23" y="140.2" width="3" height="1.7" fill="#F7C67F"/><rect x="26" y="140.2" width="1" height="1.7" fill="#F6F6F4"/><rect x="27" y="140.2" width="7" height="1.7" fill="#62E884"/><rect x="34" y="140.2" width="1" height="1.7" fill="#F6F6F4"/><rect x="35" y="140.2" width="3" height="1.7" fill="#E7EE98"/><rect x="38" y="140.2" width="1" height="1.7" fill="#F6F6F4"/><rect x="40" y="140.2" width="3" height="1.7" fill="#F286C4"/><rect x="44" y="140.2" width="1" height="1.7" fill="#F286C4"/><rect x="45" y="140.2" width="1" height="1.7" fill="#BF9EEE"/><rect x="47" y="140.2" width="1" height="1.7" fill="#F286C4"/><rect x="49" y="140.2" width="3" height="1.7" fill="#E7EE98"/><rect x="53" y="140.2" width="1" height="1.7" fill="#F286C4"/><rect x="55" y="140.2" width="3" height="1.7" fill="#E7EE98"/><rect x="58" y="140.2" width="1" height="1.7" fill="#F6F6F4"/><rect x="60" y="140.2" width="1" height="1.7" fill="#F286C4"/><rect x="62" y="140.2" width="13" height="1.7" fill="#E7EE98"/><rect x="76" y="140.2" width="1" height="1.7" fill="#F286C4"/><rect x="78" y="140.2" width="3" height="1.7" fill="#F286C4"/><rect x="82" y="140.2" width="4" height="1.7" fill="#97E1F1"/><rect x="86" y="140.2" width="3" height="1.7" fill="#F6F6F4"/><rect x="89" y="140.2" width="7" height="1.7" fill="#62E884"/><rect x="96" y="140.2" width="3" height="1.7" fill="#F6F6F4"/><rect x="0" y="142.2" width="1" height="1.7" fill="#F6F6F4"/><rect x="0" y="144.2" width="3" height="1.7" fill="#F286C4"/><rect x="4" y="144.2" width="22" height="1.7" fill="#F6F6F4"/><rect x="27" y="144.2" width="1" height="1.7" fill="#F286C4"/><rect x="29" y="144.2" width="5" height="1.7" fill="#BF9EEE"/><rect x="34" y="144.2" width="1" height="1.7" fill="#F6F6F4"/><rect x="0" y="146.2" width="8" height="1.7" fill="#F286C4"/><rect x="9" y="146.2" width="17" height="1.7" fill="#62E884"/><rect x="26" y="146.2" width="1" height="1.7" fill="#F6F6F4"/><rect x="27" y="146.2" width="1" height="1.7" fill="#F7C67F"/><rect x="28" y="146.2" width="1" height="1.7" fill="#F6F6F4"/><rect x="30" y="146.2" width="1" height="1.7" fill="#F6F6F4"/><rect x="4" y="148.2" width="2" height="1.7" fill="#F286C4"/><rect x="7" y="148.2" width="1" height="1.7" fill="#F6F6F4"/><rect x="8" y="148.2" width="1" height="1.7" fill="#F286C4"/><rect x="9" y="148.2" width="23" height="1.7" fill="#F6F6F4"/><rect x="33" y="148.2" width="1" height="1.7" fill="#F6F6F4"/><rect x="8" y="150.2" width="22" height="1.7" fill="#F6F6F4"/><rect x="31" y="150.2" width="1" height="1.7" fill="#F286C4"/><rect x="33" y="150.2" width="4" height="1.7" fill="#BF9EEE"/><rect x="37" y="150.2" width="1" height="1.7" fill="#F6F6F4"/><rect x="8" y="152.2" width="20" height="1.7" fill="#62E884"/><rect x="28" y="152.2" width="1" height="1.7" fill="#F6F6F4"/><rect x="29" y="152.2" width="1" height="1.7" fill="#F7C67F"/><rect x="30" y="152.2" width="2" height="1.7" fill="#F6F6F4"/><rect x="4" y="154.2" width="1" height="1.7" fill="#F6F6F4"/><rect x="0" y="156.2" width="1" height="1.7" fill="#F6F6F4"/><rect x="0" y="158.2" width="3" height="1.7" fill="#F286C4"/><rect x="4" y="158.2" width="5" height="1.7" fill="#97E1F1"/><rect x="10" y="158.2" width="1" height="1.7" fill="#F286C4"/><rect x="12" y="158.2" width="3" height="1.7" fill="#6272A4"/><rect x="16" y="158.2" width="6" height="1.7" fill="#F286C4"/><rect x="23" y="158.2" width="2" height="1.7" fill="#6272A4"/><rect x="26" y="158.2" width="1" height="1.7" fill="#F6F6F4"/><rect x="27" y="158.2" width="8" height="1.7" fill="#F286C4"/><rect x="36" y="158.2" width="2" height="1.7" fill="#F6F6F4"/><rect x="39" y="158.2" width="1" height="1.7" fill="#F6F6F4"/><rect x="4" y="160.2" width="8" height="1.7" fill="#F286C4"/><rect x="13" y="160.2" width="5" height="1.7" fill="#97E1F1"/><rect x="18" y="160.2" width="1" height="1.7" fill="#F6F6F4"/><rect x="19" y="160.2" width="7" height="1.7" fill="#F7C67F"/><rect x="26" y="160.2" width="1" height="1.7" fill="#F6F6F4"/><rect x="28" y="160.2" width="7" height="1.7" fill="#F7C67F"/><rect x="35" y="160.2" width="1" height="1.7" fill="#F6F6F4"/><rect x="37" y="160.2" width="10" height="1.7" fill="#F7C67F"/><rect x="47" y="160.2" width="1" height="1.7" fill="#F6F6F4"/><rect x="49" y="160.2" width="14" height="1.7" fill="#F7C67F"/><rect x="63" y="160.2" width="1" height="1.7" fill="#F6F6F4"/><rect x="65" y="160.2" width="12" height="1.7" fill="#F7C67F"/><rect x="77" y="160.2" width="1" height="1.7" fill="#F6F6F4"/><rect x="79" y="160.2" width="20" height="1.7" fill="#F7C67F"/><rect x="99" y="160.2" width="1" height="1.7" fill="#F6F6F4"/><rect x="101" y="160.2" width="1" height="1.7" fill="#F6F6F4"/><rect x="8" y="162.2" width="2" height="1.7" fill="#F286C4"/><rect x="11" y="162.2" width="1" height="1.7" fill="#F6F6F4"/><rect x="12" y="162.2" width="20" height="1.7" fill="#F7C67F"/><rect x="33" y="162.2" width="3" height="1.7" fill="#F286C4"/><rect x="37" y="162.2" width="4" height="1.7" fill="#F286C4"/><rect x="42" y="162.2" width="1" height="1.7" fill="#BF9EEE"/><rect x="43" y="162.2" width="1" height="1.7" fill="#F6F6F4"/><rect x="45" y="162.2" width="1" height="1.7" fill="#F6F6F4"/><rect x="47" y="162.2" width="20" height="1.7" fill="#F7C67F"/><rect x="68" y="162.2" width="1" height="1.7" fill="#F286C4"/><rect x="70" y="162.2" width="5" height="1.7" fill="#F6F6F4"/><rect x="76" y="162.2" width="1" height="1.7" fill="#F6F6F4"/><rect x="8" y="164.2" width="4" height="1.7" fill="#BF9EEE"/><rect x="12" y="164.2" width="8" height="1.7" fill="#F6F6F4"/><rect x="21" y="164.2" width="1" height="1.7" fill="#F286C4"/><rect x="23" y="164.2" width="7" height="1.7" fill="#F7C67F"/><rect x="30" y="164.2" width="1" height="1.7" fill="#F6F6F4"/><rect x="8" y="166.2" width="4" height="1.7" fill="#BF9EEE"/><rect x="12" y="166.2" width="8" height="1.7" fill="#F6F6F4"/><rect x="21" y="166.2" width="1" height="1.7" fill="#F286C4"/><rect x="23" y="166.2" width="7" height="1.7" fill="#F7C67F"/><rect x="30" y="166.2" width="1" height="1.7" fill="#F6F6F4"/><rect x="8" y="168.2" width="4" height="1.7" fill="#BF9EEE"/><rect x="12" y="168.2" width="11" height="1.7" fill="#F6F6F4"/><rect x="24" y="168.2" width="1" height="1.7" fill="#F286C4"/><rect x="26" y="168.2" width="10" height="1.7" fill="#F7C67F"/><rect x="36" y="168.2" width="1" height="1.7" fill="#F6F6F4"/><rect x="8" y="170.2" width="4" height="1.7" fill="#BF9EEE"/><rect x="12" y="170.2" width="15" height="1.7" fill="#F6F6F4"/><rect x="28" y="170.2" width="1" height="1.7" fill="#F286C4"/><rect x="30" y="170.2" width="14" height="1.7" fill="#F7C67F"/><rect x="44" y="170.2" width="1" height="1.7" fill="#F6F6F4"/><rect x="8" y="172.2" width="4" height="1.7" fill="#BF9EEE"/><rect x="12" y="172.2" width="13" height="1.7" fill="#F6F6F4"/><rect x="26" y="172.2" width="1" height="1.7" fill="#F286C4"/><rect x="28" y="172.2" width="12" height="1.7" fill="#F7C67F"/><rect x="40" y="172.2" width="1" height="1.7" fill="#F6F6F4"/><rect x="8" y="174.2" width="4" height="1.7" fill="#BF9EEE"/><rect x="12" y="174.2" width="21" height="1.7" fill="#F6F6F4"/><rect x="34" y="174.2" width="1" height="1.7" fill="#F286C4"/><rect x="36" y="174.2" width="20" height="1.7" fill="#F7C67F"/><rect x="56" y="174.2" width="1" height="1.7" fill="#F6F6F4"/><rect x="8" y="176.2" width="4" height="1.7" fill="#BF9EEE"/><rect x="12" y="176.2" width="15" height="1.7" fill="#F6F6F4"/><rect x="28" y="176.2" width="1" height="1.7" fill="#F286C4"/><rect x="30" y="176.2" width="3" height="1.7" fill="#F6F6F4"/><rect x="8" y="178.2" width="4" height="1.7" fill="#BF9EEE"/><rect x="12" y="178.2" width="13" height="1.7" fill="#F6F6F4"/><rect x="26" y="178.2" width="1" height="1.7" fill="#F286C4"/><rect x="28" y="178.2" width="3" height="1.7" fill="#F6F6F4"/><rect x="8" y="180.2" width="4" height="1.7" fill="#BF9EEE"/><rect x="12" y="180.2" width="16" height="1.7" fill="#F6F6F4"/><rect x="29" y="180.2" width="1" height="1.7" fill="#F286C4"/><rect x="31" y="180.2" width="1" height="1.7" fill="#BF9EEE"/><rect x="32" y="180.2" width="1" height="1.7" fill="#F6F6F4"/><rect x="8" y="182.2" width="4" height="1.7" fill="#BF9EEE"/><rect x="12" y="182.2" width="19" height="1.7" fill="#F6F6F4"/><rect x="32" y="182.2" width="1" height="1.7" fill="#F286C4"/><rect x="34" y="182.2" width="1" height="1.7" fill="#BF9EEE"/><rect x="35" y="182.2" width="1" height="1.7" fill="#F6F6F4"/><rect x="8" y="184.2" width="4" height="1.7" fill="#BF9EEE"/><rect x="12" y="184.2" width="1" height="1.7" fill="#F6F6F4"/><rect x="13" y="184.2" width="23" height="1.7" fill="#62E884"/><rect x="36" y="184.2" width="3" height="1.7" fill="#F6F6F4"/><rect x="8" y="186.2" width="4" height="1.7" fill="#BF9EEE"/><rect x="12" y="186.2" width="1" height="1.7" fill="#F6F6F4"/><rect x="13" y="186.2" width="17" height="1.7" fill="#62E884"/><rect x="30" y="186.2" width="3" height="1.7" fill="#F6F6F4"/><rect x="4" y="188.2" width="1" height="1.7" fill="#F6F6F4"/><rect x="4" y="190.2" width="5" height="1.7" fill="#97E1F1"/><rect x="9" y="190.2" width="11" height="1.7" fill="#F6F6F4"/><rect x="20" y="190.2" width="3" height="1.7" fill="#62E884"/><rect x="24" y="190.2" width="1" height="1.7" fill="#F286C4"/><rect x="26" y="190.2" width="8" height="1.7" fill="#F286C4"/><rect x="35" y="190.2" width="1" height="1.7" fill="#F6F6F4"/><rect x="36" y="190.2" width="7" height="1.7" fill="#F7C67F"/><rect x="43" y="190.2" width="1" height="1.7" fill="#F6F6F4"/><rect x="45" y="190.2" width="1" height="1.7" fill="#F6F6F4"/><rect x="8" y="192.2" width="4" height="1.7" fill="#BF9EEE"/><rect x="12" y="192.2" width="1" height="1.7" fill="#F6F6F4"/><rect x="13" y="192.2" width="11" height="1.7" fill="#62E884"/><rect x="24" y="192.2" width="1" height="1.7" fill="#F6F6F4"/><rect x="25" y="192.2" width="7" height="1.7" fill="#F7C67F"/><rect x="32" y="192.2" width="2" height="1.7" fill="#F6F6F4"/><rect x="4" y="194.2" width="2" height="1.7" fill="#F6F6F4"/><rect x="4" y="196.2" width="5" height="1.7" fill="#97E1F1"/><rect x="9" y="196.2" width="11" height="1.7" fill="#F6F6F4"/><rect x="20" y="196.2" width="6" height="1.7" fill="#62E884"/><rect x="27" y="196.2" width="1" height="1.7" fill="#F286C4"/><rect x="29" y="196.2" width="8" height="1.7" fill="#F286C4"/><rect x="38" y="196.2" width="1" height="1.7" fill="#F6F6F4"/><rect x="39" y="196.2" width="7" height="1.7" fill="#F7C67F"/><rect x="46" y="196.2" width="1" height="1.7" fill="#F6F6F4"/><rect x="48" y="196.2" width="3" height="1.7" fill="#F7C67F"/><rect x="51" y="196.2" width="1" height="1.7" fill="#F6F6F4"/><rect x="53" y="196.2" width="1" height="1.7" fill="#F6F6F4"/><rect x="8" y="198.2" width="4" height="1.7" fill="#BF9EEE"/><rect x="12" y="198.2" width="1" height="1.7" fill="#F6F6F4"/><rect x="13" y="198.2" width="11" height="1.7" fill="#62E884"/><rect x="24" y="198.2" width="1" height="1.7" fill="#F6F6F4"/><rect x="25" y="198.2" width="7" height="1.7" fill="#F7C67F"/><rect x="32" y="198.2" width="1" height="1.7" fill="#F6F6F4"/><rect x="34" y="198.2" width="3" height="1.7" fill="#F7C67F"/><rect x="37" y="198.2" width="2" height="1.7" fill="#F6F6F4"/><rect x="4" y="200.2" width="2" height="1.7" fill="#F6F6F4"/><rect x="4" y="202.2" width="5" height="1.7" fill="#97E1F1"/><rect x="9" y="202.2" width="11" height="1.7" fill="#F6F6F4"/><rect x="20" y="202.2" width="5" height="1.7" fill="#62E884"/><rect x="26" y="202.2" width="1" height="1.7" fill="#F286C4"/><rect x="28" y="202.2" width="8" height="1.7" fill="#F286C4"/><rect x="37" y="202.2" width="2" height="1.7" fill="#F6F6F4"/><rect x="40" y="202.2" width="1" height="1.7" fill="#F6F6F4"/><rect x="8" y="204.2" width="2" height="1.7" fill="#F286C4"/><rect x="11" y="204.2" width="1" height="1.7" fill="#F6F6F4"/><rect x="12" y="204.2" width="4" height="1.7" fill="#BF9EEE"/><rect x="16" y="204.2" width="19" height="1.7" fill="#F6F6F4"/><rect x="36" y="204.2" width="3" height="1.7" fill="#F286C4"/><rect x="40" y="204.2" width="1" height="1.7" fill="#BF9EEE"/><rect x="41" y="204.2" width="1" height="1.7" fill="#F6F6F4"/><rect x="43" y="204.2" width="1" height="1.7" fill="#F6F6F4"/><rect x="12" y="206.2" width="3" height="1.7" fill="#F286C4"/><rect x="16" y="206.2" width="8" height="1.7" fill="#F6F6F4"/><rect x="25" y="206.2" width="1" height="1.7" fill="#F286C4"/><rect x="27" y="206.2" width="14" height="1.7" fill="#62E884"/><rect x="41" y="206.2" width="1" height="1.7" fill="#F6F6F4"/><rect x="42" y="206.2" width="4" height="1.7" fill="#BF9EEE"/><rect x="46" y="206.2" width="16" height="1.7" fill="#F6F6F4"/><rect x="63" y="206.2" width="12" height="1.7" fill="#62E884"/><rect x="75" y="206.2" width="1" height="1.7" fill="#F6F6F4"/><rect x="76" y="206.2" width="4" height="1.7" fill="#BF9EEE"/><rect x="80" y="206.2" width="16" height="1.7" fill="#F6F6F4"/><rect x="12" y="214.2" width="4" height="1.7" fill="#BF9EEE"/><rect x="16" y="214.2" width="15" height="1.7" fill="#F6F6F4"/><rect x="32" y="214.2" width="1" height="1.7" fill="#F286C4"/><rect x="34" y="214.2" width="3" height="1.7" fill="#F6F6F4"/><rect x="12" y="216.2" width="4" height="1.7" fill="#BF9EEE"/><rect x="16" y="216.2" width="13" height="1.7" fill="#F6F6F4"/><rect x="30" y="216.2" width="1" height="1.7" fill="#F286C4"/><rect x="32" y="216.2" width="3" height="1.7" fill="#F6F6F4"/><rect x="12" y="218.2" width="4" height="1.7" fill="#BF9EEE"/><rect x="16" y="218.2" width="16" height="1.7" fill="#F6F6F4"/><rect x="33" y="218.2" width="1" height="1.7" fill="#F286C4"/><rect x="35" y="218.2" width="1" height="1.7" fill="#BF9EEE"/><rect x="36" y="218.2" width="1" height="1.7" fill="#F6F6F4"/><rect x="12" y="220.2" width="4" height="1.7" fill="#BF9EEE"/><rect x="16" y="220.2" width="19" height="1.7" fill="#F6F6F4"/><rect x="36" y="220.2" width="1" height="1.7" fill="#F286C4"/><rect x="38" y="220.2" width="1" height="1.7" fill="#BF9EEE"/><rect x="39" y="220.2" width="1" height="1.7" fill="#F6F6F4"/><rect x="8" y="222.2" width="1" height="1.7" fill="#F6F6F4"/><rect x="4" y="224.2" width="2" height="1.7" fill="#F6F6F4"/><rect x="4" y="226.2" width="5" height="1.7" fill="#97E1F1"/><rect x="9" y="226.2" width="11" height="1.7" fill="#F6F6F4"/><rect x="20" y="226.2" width="11" height="1.7" fill="#62E884"/><rect x="32" y="226.2" width="1" height="1.7" fill="#F286C4"/><rect x="34" y="226.2" width="8" height="1.7" fill="#F286C4"/><rect x="43" y="226.2" width="1" height="1.7" fill="#F6F6F4"/><rect x="44" y="226.2" width="9" height="1.7" fill="#F7C67F"/><rect x="53" y="226.2" width="1" height="1.7" fill="#F6F6F4"/><rect x="55" y="226.2" width="1" height="1.7" fill="#F6F6F4"/><rect x="8" y="228.2" width="2" height="1.7" fill="#6272A4"/><rect x="11" y="228.2" width="8" height="1.7" fill="#6272A4"/><rect x="20" y="228.2" width="4" height="1.7" fill="#6272A4"/><rect x="25" y="228.2" width="4" height="1.7" fill="#6272A4"/><rect x="30" y="228.2" width="12" height="1.7" fill="#6272A4"/><rect x="43" y="228.2" width="3" height="1.7" fill="#6272A4"/><rect x="47" y="228.2" width="7" height="1.7" fill="#6272A4"/><rect x="55" y="228.2" width="12" height="1.7" fill="#6272A4"/><rect x="68" y="228.2" width="4" height="1.7" fill="#6272A4"/><rect x="73" y="228.2" width="5" height="1.7" fill="#6272A4"/><rect x="79" y="228.2" width="2" height="1.7" fill="#6272A4"/><rect x="82" y="228.2" width="1" height="1.7" fill="#6272A4"/><rect x="84" y="228.2" width="3" height="1.7" fill="#6272A4"/><rect x="88" y="228.2" width="2" height="1.7" fill="#6272A4"/><rect x="91" y="228.2" width="6" height="1.7" fill="#6272A4"/><rect x="98" y="228.2" width="2" height="1.7" fill="#6272A4"/><rect x="101" y="228.2" width="7" height="1.7" fill="#6272A4"/><rect x="8" y="230.2" width="2" height="1.7" fill="#F286C4"/><rect x="11" y="230.2" width="1" height="1.7" fill="#F6F6F4"/><rect x="12" y="230.2" width="1" height="1.7" fill="#F286C4"/><rect x="13" y="230.2" width="27" height="1.7" fill="#F6F6F4"/><rect x="40" y="230.2" width="4" height="1.7" fill="#62E884"/><rect x="44" y="230.2" width="1" height="1.7" fill="#F6F6F4"/><rect x="45" y="230.2" width="9" height="1.7" fill="#F7C67F"/><rect x="54" y="230.2" width="2" height="1.7" fill="#F6F6F4"/><rect x="57" y="230.2" width="1" height="1.7" fill="#F6F6F4"/><rect x="12" y="232.2" width="6" height="1.7" fill="#F286C4"/><rect x="19" y="232.2" width="9" height="1.7" fill="#F7C67F"/><rect x="28" y="232.2" width="8" height="1.7" fill="#F6F6F4"/><rect x="8" y="234.2" width="1" height="1.7" fill="#F6F6F4"/><rect x="8" y="236.2" width="2" height="1.7" fill="#F286C4"/><rect x="11" y="236.2" width="1" height="1.7" fill="#F6F6F4"/><rect x="12" y="236.2" width="6" height="1.7" fill="#BF9EEE"/><rect x="18" y="236.2" width="12" height="1.7" fill="#F6F6F4"/><rect x="31" y="236.2" width="3" height="1.7" fill="#F286C4"/><rect x="35" y="236.2" width="9" height="1.7" fill="#BF9EEE"/><rect x="44" y="236.2" width="1" height="1.7" fill="#F6F6F4"/><rect x="46" y="236.2" width="1" height="1.7" fill="#F6F6F4"/><rect x="12" y="238.2" width="6" height="1.7" fill="#F286C4"/><rect x="19" y="238.2" width="3" height="1.7" fill="#F286C4"/><rect x="23" y="238.2" width="11" height="1.7" fill="#97E1F1"/><rect x="34" y="238.2" width="3" height="1.7" fill="#F6F6F4"/><rect x="37" y="238.2" width="6" height="1.7" fill="#62E884"/><rect x="43" y="238.2" width="1" height="1.7" fill="#F6F6F4"/><rect x="44" y="238.2" width="9" height="1.7" fill="#F7C67F"/><rect x="53" y="238.2" width="9" height="1.7" fill="#F6F6F4"/><rect x="8" y="240.2" width="1" height="1.7" fill="#F6F6F4"/><rect x="8" y="242.2" width="6" height="1.7" fill="#F286C4"/><rect x="15" y="242.2" width="3" height="1.7" fill="#F286C4"/><rect x="19" y="242.2" width="4" height="1.7" fill="#97E1F1"/><rect x="23" y="242.2" width="2" height="1.7" fill="#F6F6F4"/><rect x="25" y="242.2" width="9" height="1.7" fill="#F7C67F"/><rect x="34" y="242.2" width="8" height="1.7" fill="#F6F6F4"/><rect x="4" y="244.2" width="2" height="1.7" fill="#F6F6F4"/><rect x="4" y="246.2" width="5" height="1.7" fill="#97E1F1"/><rect x="9" y="246.2" width="11" height="1.7" fill="#F6F6F4"/><rect x="20" y="246.2" width="11" height="1.7" fill="#62E884"/><rect x="32" y="246.2" width="1" height="1.7" fill="#F286C4"/><rect x="34" y="246.2" width="8" height="1.7" fill="#F286C4"/><rect x="43" y="246.2" width="1" height="1.7" fill="#F6F6F4"/><rect x="44" y="246.2" width="7" height="1.7" fill="#F7C67F"/><rect x="51" y="246.2" width="1" height="1.7" fill="#F6F6F4"/><rect x="53" y="246.2" width="3" height="1.7" fill="#F7C67F"/><rect x="56" y="246.2" width="1" height="1.7" fill="#F6F6F4"/><rect x="58" y="246.2" width="1" height="1.7" fill="#F6F6F4"/><rect x="8" y="248.2" width="3" height="1.7" fill="#F286C4"/><rect x="12" y="248.2" width="2" height="1.7" fill="#F6F6F4"/><rect x="15" y="248.2" width="1" height="1.7" fill="#F286C4"/><rect x="17" y="248.2" width="4" height="1.7" fill="#BF9EEE"/><rect x="21" y="248.2" width="1" height="1.7" fill="#F6F6F4"/><rect x="22" y="248.2" width="7" height="1.7" fill="#62E884"/><rect x="29" y="248.2" width="1" height="1.7" fill="#F6F6F4"/><rect x="30" y="248.2" width="7" height="1.7" fill="#F7C67F"/><rect x="37" y="248.2" width="2" height="1.7" fill="#F6F6F4"/><rect x="40" y="248.2" width="16" height="1.7" fill="#F6F6F4"/><rect x="57" y="248.2" width="1" height="1.7" fill="#F286C4"/><rect x="59" y="248.2" width="20" height="1.7" fill="#F6F6F4"/><rect x="80" y="248.2" width="16" height="1.7" fill="#F6F6F4"/><rect x="97" y="248.2" width="1" height="1.7" fill="#F286C4"/><rect x="99" y="248.2" width="12" height="1.7" fill="#F6F6F4"/><rect x="8" y="250.2" width="2" height="1.7" fill="#F286C4"/><rect x="11" y="250.2" width="17" height="1.7" fill="#F6F6F4"/><rect x="29" y="250.2" width="2" height="1.7" fill="#F286C4"/><rect x="32" y="250.2" width="4" height="1.7" fill="#BF9EEE"/><rect x="36" y="250.2" width="16" height="1.7" fill="#F6F6F4"/><rect x="53" y="250.2" width="1" height="1.7" fill="#F6F6F4"/><rect x="12" y="252.2" width="7" height="1.7" fill="#97E1F1"/><rect x="19" y="252.2" width="1" height="1.7" fill="#F6F6F4"/><rect x="20" y="252.2" width="4" height="1.7" fill="#62E884"/><rect x="24" y="252.2" width="1" height="1.7" fill="#F6F6F4"/><rect x="25" y="252.2" width="10" height="1.7" fill="#E7EE98"/><rect x="36" y="252.2" width="1" height="1.7" fill="#E7EE98"/><rect x="38" y="252.2" width="7" height="1.7" fill="#E7EE98"/><rect x="46" y="252.2" width="5" height="1.7" fill="#E7EE98"/><rect x="52" y="252.2" width="4" height="1.7" fill="#E7EE98"/><rect x="57" y="252.2" width="3" height="1.7" fill="#E7EE98"/><rect x="61" y="252.2" width="6" height="1.7" fill="#E7EE98"/><rect x="68" y="252.2" width="4" height="1.7" fill="#E7EE98"/><rect x="73" y="252.2" width="3" height="1.7" fill="#E7EE98"/><rect x="77" y="252.2" width="7" height="1.7" fill="#E7EE98"/><rect x="85" y="252.2" width="7" height="1.7" fill="#E7EE98"/><rect x="93" y="252.2" width="4" height="1.7" fill="#E7EE98"/><rect x="98" y="252.2" width="1" height="1.7" fill="#E7EE98"/><rect x="100" y="252.2" width="1" height="1.7" fill="#F286C4"/><rect x="102" y="252.2" width="4" height="1.7" fill="#BF9EEE"/><rect x="106" y="252.2" width="5" height="1.7" fill="#F6F6F4"/><rect x="12" y="254.2" width="6" height="1.7" fill="#F286C4"/><rect x="18" y="254.2" width="1" height="1.7" fill="#F6F6F4"/><rect x="8" y="256.1" width="1" height="1.7" fill="#F6F6F4"/><rect x="8" y="258.1" width="2" height="1.7" fill="#F286C4"/><rect x="11" y="258.1" width="1" height="1.7" fill="#F6F6F4"/><rect x="12" y="258.1" width="4" height="1.7" fill="#BF9EEE"/><rect x="16" y="258.1" width="1" height="1.7" fill="#F6F6F4"/><rect x="17" y="258.1" width="13" height="1.7" fill="#62E884"/><rect x="30" y="258.1" width="1" height="1.7" fill="#F6F6F4"/><rect x="31" y="258.1" width="3" height="1.7" fill="#F7C67F"/><rect x="34" y="258.1" width="2" height="1.7" fill="#F6F6F4"/><rect x="37" y="258.1" width="1" height="1.7" fill="#F6F6F4"/><rect x="12" y="260.1" width="4" height="1.7" fill="#BF9EEE"/><rect x="16" y="260.1" width="1" height="1.7" fill="#F6F6F4"/><rect x="17" y="260.1" width="6" height="1.7" fill="#62E884"/><rect x="23" y="260.1" width="1" height="1.7" fill="#F6F6F4"/><rect x="24" y="260.1" width="3" height="1.7" fill="#F7C67F"/><rect x="27" y="260.1" width="2" height="1.7" fill="#F6F6F4"/><rect x="8" y="262.1" width="1" height="1.7" fill="#F6F6F4"/><rect x="8" y="264.1" width="2" height="1.7" fill="#F286C4"/><rect x="11" y="264.1" width="1" height="1.7" fill="#F6F6F4"/><rect x="12" y="264.1" width="4" height="1.7" fill="#BF9EEE"/><rect x="16" y="264.1" width="1" height="1.7" fill="#F6F6F4"/><rect x="17" y="264.1" width="25" height="1.7" fill="#62E884"/><rect x="42" y="264.1" width="19" height="1.7" fill="#F6F6F4"/><rect x="62" y="264.1" width="1" height="1.7" fill="#F6F6F4"/><rect x="12" y="266.1" width="4" height="1.7" fill="#BF9EEE"/><rect x="16" y="266.1" width="1" height="1.7" fill="#F6F6F4"/><rect x="17" y="266.1" width="5" height="1.7" fill="#62E884"/><rect x="22" y="266.1" width="3" height="1.7" fill="#F6F6F4"/><rect x="8" y="268.1" width="1" height="1.7" fill="#F6F6F4"/><rect x="8" y="270.1" width="4" height="1.7" fill="#BF9EEE"/><rect x="12" y="270.1" width="1" height="1.7" fill="#F6F6F4"/><rect x="13" y="270.1" width="4" height="1.7" fill="#62E884"/><rect x="17" y="270.1" width="18" height="1.7" fill="#F6F6F4"/><rect x="36" y="270.1" width="17" height="1.7" fill="#F6F6F4"/><rect x="54" y="270.1" width="3" height="1.7" fill="#F7C67F"/><rect x="57" y="270.1" width="2" height="1.7" fill="#F6F6F4"/><rect x="8" y="272.1" width="2" height="1.7" fill="#F286C4"/><rect x="11" y="272.1" width="1" height="1.7" fill="#F6F6F4"/><rect x="12" y="272.1" width="4" height="1.7" fill="#BF9EEE"/><rect x="16" y="272.1" width="1" height="1.7" fill="#F6F6F4"/><rect x="17" y="272.1" width="6" height="1.7" fill="#62E884"/><rect x="23" y="272.1" width="3" height="1.7" fill="#F6F6F4"/><rect x="27" y="272.1" width="1" height="1.7" fill="#F6F6F4"/><rect x="12" y="274.1" width="4" height="1.7" fill="#BF9EEE"/><rect x="16" y="274.1" width="1" height="1.7" fill="#F6F6F4"/><rect x="17" y="274.1" width="5" height="1.7" fill="#62E884"/><rect x="22" y="274.1" width="3" height="1.7" fill="#F6F6F4"/><rect x="8" y="276.1" width="1" height="1.7" fill="#F6F6F4"/><rect x="4" y="278.1" width="2" height="1.7" fill="#F6F6F4"/><rect x="4" y="280.1" width="5" height="1.7" fill="#97E1F1"/><rect x="9" y="280.1" width="11" height="1.7" fill="#F6F6F4"/><rect x="20" y="280.1" width="7" height="1.7" fill="#62E884"/><rect x="28" y="280.1" width="1" height="1.7" fill="#F286C4"/><rect x="30" y="280.1" width="8" height="1.7" fill="#F286C4"/><rect x="39" y="280.1" width="1" height="1.7" fill="#F6F6F4"/><rect x="40" y="280.1" width="7" height="1.7" fill="#F7C67F"/><rect x="47" y="280.1" width="1" height="1.7" fill="#F6F6F4"/><rect x="49" y="280.1" width="1" height="1.7" fill="#F6F6F4"/><rect x="8" y="282.1" width="3" height="1.7" fill="#F286C4"/><rect x="12" y="282.1" width="16" height="1.7" fill="#F6F6F4"/><rect x="29" y="282.1" width="1" height="1.7" fill="#F286C4"/><rect x="31" y="282.1" width="13" height="1.7" fill="#62E884"/><rect x="44" y="282.1" width="1" height="1.7" fill="#F6F6F4"/><rect x="45" y="282.1" width="7" height="1.7" fill="#F7C67F"/><rect x="52" y="282.1" width="2" height="1.7" fill="#F6F6F4"/><rect x="8" y="284.1" width="3" height="1.7" fill="#F286C4"/><rect x="12" y="284.1" width="16" height="1.7" fill="#F6F6F4"/><rect x="29" y="284.1" width="1" height="1.7" fill="#F286C4"/><rect x="31" y="284.1" width="4" height="1.7" fill="#BF9EEE"/><rect x="35" y="284.1" width="1" height="1.7" fill="#F6F6F4"/><rect x="36" y="284.1" width="11" height="1.7" fill="#62E884"/><rect x="47" y="284.1" width="19" height="1.7" fill="#F6F6F4"/><rect x="8" y="286.1" width="6" height="1.7" fill="#F286C4"/><rect x="15" y="286.1" width="1" height="1.7" fill="#F6F6F4"/><rect x="17" y="286.1" width="16" height="1.7" fill="#F6F6F4"/><rect x="33" y="286.1" width="1" height="1.7" fill="#F286C4"/><rect x="35" y="286.1" width="17" height="1.7" fill="#F6F6F4"/><rect x="53" y="286.1" width="16" height="1.7" fill="#F6F6F4"/><rect x="69" y="286.1" width="1" height="1.7" fill="#F286C4"/><rect x="71" y="286.1" width="16" height="1.7" fill="#F6F6F4"/><rect x="88" y="286.1" width="2" height="1.7" fill="#F6F6F4"/><rect x="4" y="288.1" width="2" height="1.7" fill="#F6F6F4"/><rect x="4" y="290.1" width="5" height="1.7" fill="#97E1F1"/><rect x="9" y="290.1" width="11" height="1.7" fill="#F6F6F4"/><rect x="20" y="290.1" width="4" height="1.7" fill="#62E884"/><rect x="25" y="290.1" width="1" height="1.7" fill="#F286C4"/><rect x="27" y="290.1" width="8" height="1.7" fill="#F286C4"/><rect x="36" y="290.1" width="1" height="1.7" fill="#F6F6F4"/><rect x="37" y="290.1" width="16" height="1.7" fill="#F7C67F"/><rect x="53" y="290.1" width="1" height="1.7" fill="#F6F6F4"/><rect x="55" y="290.1" width="16" height="1.7" fill="#F7C67F"/><rect x="71" y="290.1" width="1" height="1.7" fill="#F6F6F4"/><rect x="73" y="290.1" width="3" height="1.7" fill="#F7C67F"/><rect x="76" y="290.1" width="1" height="1.7" fill="#F6F6F4"/><rect x="78" y="290.1" width="1" height="1.7" fill="#F6F6F4"/><rect x="8" y="292.1" width="2" height="1.7" fill="#F286C4"/><rect x="11" y="292.1" width="1" height="1.7" fill="#F6F6F4"/><rect x="12" y="292.1" width="4" height="1.7" fill="#BF9EEE"/><rect x="16" y="292.1" width="19" height="1.7" fill="#F6F6F4"/><rect x="36" y="292.1" width="1" height="1.7" fill="#F286C4"/><rect x="38" y="292.1" width="1" height="1.7" fill="#BF9EEE"/><rect x="39" y="292.1" width="1" height="1.7" fill="#F6F6F4"/><rect x="41" y="292.1" width="1" height="1.7" fill="#F6F6F4"/><rect x="12" y="294.1" width="2" height="1.7" fill="#6272A4"/><rect x="15" y="294.1" width="2" height="1.7" fill="#6272A4"/><rect x="18" y="294.1" width="9" height="1.7" fill="#6272A4"/><rect x="28" y="294.1" width="2" height="1.7" fill="#6272A4"/><rect x="31" y="294.1" width="13" height="1.7" fill="#6272A4"/><rect x="12" y="296.1" width="4" height="1.7" fill="#BF9EEE"/><rect x="16" y="296.1" width="16" height="1.7" fill="#F6F6F4"/><rect x="33" y="296.1" width="2" height="1.7" fill="#F286C4"/><rect x="36" y="296.1" width="1" height="1.7" fill="#BF9EEE"/><rect x="37" y="296.1" width="1" height="1.7" fill="#F6F6F4"/><rect x="8" y="298.1" width="1" height="1.7" fill="#F6F6F4"/><rect x="8" y="300.1" width="2" height="1.7" fill="#F286C4"/><rect x="11" y="300.1" width="1" height="1.7" fill="#F6F6F4"/><rect x="12" y="300.1" width="3" height="1.7" fill="#F7C67F"/><rect x="16" y="300.1" width="3" height="1.7" fill="#F286C4"/><rect x="20" y="300.1" width="9" height="1.7" fill="#BF9EEE"/><rect x="29" y="300.1" width="1" height="1.7" fill="#F6F6F4"/><rect x="31" y="300.1" width="1" height="1.7" fill="#F6F6F4"/><rect x="12" y="302.1" width="4" height="1.7" fill="#BF9EEE"/><rect x="16" y="302.1" width="14" height="1.7" fill="#F6F6F4"/><rect x="30" y="302.1" width="3" height="1.7" fill="#F7C67F"/><rect x="33" y="302.1" width="1" height="1.7" fill="#F6F6F4"/><rect x="35" y="302.1" width="1" height="1.7" fill="#F286C4"/><rect x="37" y="302.1" width="16" height="1.7" fill="#F7C67F"/><rect x="53" y="302.1" width="1" height="1.7" fill="#F6F6F4"/><rect x="8" y="304.1" width="1" height="1.7" fill="#F6F6F4"/><rect x="8" y="306.1" width="4" height="1.7" fill="#F286C4"/><rect x="13" y="306.1" width="1" height="1.7" fill="#F6F6F4"/><rect x="12" y="308.1" width="4" height="1.7" fill="#BF9EEE"/><rect x="16" y="308.1" width="16" height="1.7" fill="#F6F6F4"/><rect x="32" y="308.1" width="4" height="1.7" fill="#62E884"/><rect x="36" y="308.1" width="1" height="1.7" fill="#F6F6F4"/><rect x="37" y="308.1" width="16" height="1.7" fill="#F7C67F"/><rect x="53" y="308.1" width="2" height="1.7" fill="#F6F6F4"/><rect x="8" y="310.1" width="1" height="1.7" fill="#F6F6F4"/><rect x="8" y="312.1" width="4" height="1.7" fill="#BF9EEE"/><rect x="12" y="312.1" width="16" height="1.7" fill="#F6F6F4"/><rect x="29" y="312.1" width="2" height="1.7" fill="#F286C4"/><rect x="32" y="312.1" width="16" height="1.7" fill="#F7C67F"/><rect x="48" y="312.1" width="1" height="1.7" fill="#F6F6F4"/><rect x="8" y="314.1" width="4" height="1.7" fill="#BF9EEE"/><rect x="12" y="314.1" width="19" height="1.7" fill="#F6F6F4"/><rect x="32" y="314.1" width="2" height="1.7" fill="#F286C4"/><rect x="35" y="314.1" width="1" height="1.7" fill="#BF9EEE"/><rect x="36" y="314.1" width="1" height="1.7" fill="#F6F6F4"/><rect x="4" y="316.1" width="2" height="1.7" fill="#F6F6F4"/><rect x="4" y="318.1" width="5" height="1.7" fill="#97E1F1"/><rect x="9" y="318.1" width="11" height="1.7" fill="#F6F6F4"/><rect x="20" y="318.1" width="6" height="1.7" fill="#62E884"/><rect x="27" y="318.1" width="1" height="1.7" fill="#F286C4"/><rect x="29" y="318.1" width="8" height="1.7" fill="#F286C4"/><rect x="38" y="318.1" width="1" height="1.7" fill="#F6F6F4"/><rect x="39" y="318.1" width="3" height="1.7" fill="#F7C67F"/><rect x="42" y="318.1" width="1" height="1.7" fill="#F6F6F4"/><rect x="44" y="318.1" width="1" height="1.7" fill="#F6F6F4"/><rect x="8" y="320.1" width="3" height="1.7" fill="#F286C4"/><rect x="12" y="320.1" width="14" height="1.7" fill="#F6F6F4"/><rect x="27" y="320.1" width="1" height="1.7" fill="#F286C4"/><rect x="29" y="320.1" width="4" height="1.7" fill="#BF9EEE"/><rect x="33" y="320.1" width="14" height="1.7" fill="#F6F6F4"/><rect x="47" y="320.1" width="3" height="1.7" fill="#F7C67F"/><rect x="50" y="320.1" width="2" height="1.7" fill="#F6F6F4"/><rect x="8" y="322.1" width="6" height="1.7" fill="#F286C4"/><rect x="15" y="322.1" width="4" height="1.7" fill="#BF9EEE"/><rect x="19" y="322.1" width="14" height="1.7" fill="#F6F6F4"/><rect x="33" y="322.1" width="3" height="1.7" fill="#F7C67F"/><rect x="36" y="322.1" width="2" height="1.7" fill="#F6F6F4"/><rect x="8" y="324.1" width="3" height="1.7" fill="#F286C4"/><rect x="12" y="324.1" width="16" height="1.7" fill="#F6F6F4"/><rect x="29" y="324.1" width="1" height="1.7" fill="#F286C4"/><rect x="31" y="324.1" width="4" height="1.7" fill="#BF9EEE"/><rect x="35" y="324.1" width="1" height="1.7" fill="#F6F6F4"/><rect x="36" y="324.1" width="11" height="1.7" fill="#62E884"/><rect x="47" y="324.1" width="17" height="1.7" fill="#F6F6F4"/><rect x="8" y="326.1" width="4" height="1.7" fill="#BF9EEE"/><rect x="12" y="326.1" width="16" height="1.7" fill="#F6F6F4"/><rect x="29" y="326.1" width="2" height="1.7" fill="#F286C4"/><rect x="32" y="326.1" width="17" height="1.7" fill="#F6F6F4"/><rect x="8" y="328.1" width="4" height="1.7" fill="#BF9EEE"/><rect x="12" y="328.1" width="19" height="1.7" fill="#F6F6F4"/><rect x="32" y="328.1" width="2" height="1.7" fill="#F286C4"/><rect x="35" y="328.1" width="1" height="1.7" fill="#BF9EEE"/><rect x="36" y="328.1" width="1" height="1.7" fill="#F6F6F4"/><rect x="8" y="330.1" width="2" height="1.7" fill="#F286C4"/><rect x="11" y="330.1" width="1" height="1.7" fill="#F6F6F4"/><rect x="12" y="330.1" width="4" height="1.7" fill="#BF9EEE"/><rect x="16" y="330.1" width="19" height="1.7" fill="#F6F6F4"/><rect x="36" y="330.1" width="1" height="1.7" fill="#F286C4"/><rect x="38" y="330.1" width="1" height="1.7" fill="#BF9EEE"/><rect x="39" y="330.1" width="1" height="1.7" fill="#F6F6F4"/><rect x="41" y="330.1" width="1" height="1.7" fill="#F6F6F4"/><rect x="12" y="332.1" width="4" height="1.7" fill="#BF9EEE"/><rect x="16" y="332.1" width="16" height="1.7" fill="#F6F6F4"/><rect x="33" y="332.1" width="2" height="1.7" fill="#F286C4"/><rect x="36" y="332.1" width="1" height="1.7" fill="#BF9EEE"/><rect x="37" y="332.1" width="1" height="1.7" fill="#F6F6F4"/><rect x="8" y="334.1" width="1" height="1.7" fill="#F6F6F4"/><rect x="4" y="336.1" width="2" height="1.7" fill="#F6F6F4"/><rect x="4" y="338.1" width="5" height="1.7" fill="#97E1F1"/><rect x="9" y="338.1" width="11" height="1.7" fill="#F6F6F4"/><rect x="20" y="338.1" width="13" height="1.7" fill="#62E884"/><rect x="34" y="338.1" width="1" height="1.7" fill="#F286C4"/><rect x="36" y="338.1" width="8" height="1.7" fill="#F286C4"/><rect x="45" y="338.1" width="1" height="1.7" fill="#F6F6F4"/><rect x="46" y="338.1" width="3" height="1.7" fill="#F7C67F"/><rect x="49" y="338.1" width="1" height="1.7" fill="#F6F6F4"/><rect x="51" y="338.1" width="1" height="1.7" fill="#F6F6F4"/><rect x="8" y="340.1" width="6" height="1.7" fill="#F286C4"/><rect x="15" y="340.1" width="3" height="1.7" fill="#F7C67F"/><rect x="19" y="340.1" width="3" height="1.7" fill="#F286C4"/><rect x="23" y="340.1" width="9" height="1.7" fill="#BF9EEE"/><rect x="33" y="340.1" width="2" height="1.7" fill="#F286C4"/><rect x="36" y="340.1" width="4" height="1.7" fill="#BF9EEE"/><rect x="40" y="340.1" width="14" height="1.7" fill="#F6F6F4"/><rect x="54" y="340.1" width="3" height="1.7" fill="#F7C67F"/><rect x="57" y="340.1" width="1" height="1.7" fill="#F6F6F4"/><rect x="59" y="340.1" width="3" height="1.7" fill="#F286C4"/><rect x="63" y="340.1" width="9" height="1.7" fill="#BF9EEE"/><rect x="72" y="340.1" width="1" height="1.7" fill="#F6F6F4"/><rect x="4" y="342.1" width="2" height="1.7" fill="#F6F6F4"/><rect x="4" y="344.1" width="5" height="1.7" fill="#97E1F1"/><rect x="9" y="344.1" width="11" height="1.7" fill="#F6F6F4"/><rect x="20" y="344.1" width="25" height="1.7" fill="#62E884"/><rect x="46" y="344.1" width="1" height="1.7" fill="#F286C4"/><rect x="48" y="344.1" width="8" height="1.7" fill="#F286C4"/><rect x="57" y="344.1" width="1" height="1.7" fill="#F6F6F4"/><rect x="58" y="344.1" width="16" height="1.7" fill="#F7C67F"/><rect x="74" y="344.1" width="1" height="1.7" fill="#F6F6F4"/><rect x="76" y="344.1" width="1" height="1.7" fill="#F6F6F4"/><rect x="8" y="346.1" width="2" height="1.7" fill="#6272A4"/><rect x="11" y="346.1" width="4" height="1.7" fill="#6272A4"/><rect x="16" y="346.1" width="2" height="1.7" fill="#6272A4"/><rect x="19" y="346.1" width="3" height="1.7" fill="#6272A4"/><rect x="23" y="346.1" width="9" height="1.7" fill="#6272A4"/><rect x="33" y="346.1" width="2" height="1.7" fill="#6272A4"/><rect x="36" y="346.1" width="3" height="1.7" fill="#6272A4"/><rect x="40" y="346.1" width="3" height="1.7" fill="#6272A4"/><rect x="44" y="346.1" width="2" height="1.7" fill="#6272A4"/><rect x="47" y="346.1" width="3" height="1.7" fill="#6272A4"/><rect x="51" y="346.1" width="7" height="1.7" fill="#6272A4"/><rect x="8" y="348.1" width="6" height="1.7" fill="#F286C4"/><rect x="15" y="348.1" width="4" height="1.7" fill="#BF9EEE"/><rect x="19" y="348.1" width="16" height="1.7" fill="#F6F6F4"/><rect x="36" y="348.1" width="1" height="1.7" fill="#F286C4"/><rect x="38" y="348.1" width="16" height="1.7" fill="#F7C67F"/><rect x="55" y="348.1" width="1" height="1.7" fill="#F286C4"/><rect x="57" y="348.1" width="1" height="1.7" fill="#BF9EEE"/><rect x="59" y="348.1" width="2" height="1.7" fill="#F286C4"/><rect x="62" y="348.1" width="4" height="1.7" fill="#BF9EEE"/><rect x="66" y="348.1" width="12" height="1.7" fill="#F6F6F4"/><rect x="4" y="350.1" width="2" height="1.7" fill="#F6F6F4"/><rect x="4" y="352.1" width="5" height="1.7" fill="#97E1F1"/><rect x="9" y="352.1" width="11" height="1.7" fill="#F6F6F4"/><rect x="20" y="352.1" width="6" height="1.7" fill="#62E884"/><rect x="27" y="352.1" width="1" height="1.7" fill="#F286C4"/><rect x="29" y="352.1" width="8" height="1.7" fill="#F286C4"/><rect x="38" y="352.1" width="2" height="1.7" fill="#F6F6F4"/><rect x="41" y="352.1" width="1" height="1.7" fill="#F6F6F4"/><rect x="8" y="354.1" width="6" height="1.7" fill="#F286C4"/><rect x="15" y="354.1" width="4" height="1.7" fill="#BF9EEE"/><rect x="19" y="354.1" width="19" height="1.7" fill="#F6F6F4"/><rect x="39" y="354.1" width="3" height="1.7" fill="#F286C4"/><rect x="43" y="354.1" width="4" height="1.7" fill="#BF9EEE"/><rect x="47" y="354.1" width="8" height="1.7" fill="#F6F6F4"/><rect x="56" y="354.1" width="2" height="1.7" fill="#F286C4"/><rect x="59" y="354.1" width="4" height="1.7" fill="#BF9EEE"/><rect x="63" y="354.1" width="16" height="1.7" fill="#F6F6F4"/><rect x="80" y="354.1" width="2" height="1.7" fill="#F286C4"/><rect x="83" y="354.1" width="4" height="1.7" fill="#BF9EEE"/><rect x="87" y="354.1" width="12" height="1.7" fill="#F6F6F4"/><rect x="4" y="356.1" width="2" height="1.7" fill="#F6F6F4"/><rect x="4" y="358.1" width="5" height="1.7" fill="#97E1F1"/><rect x="9" y="358.1" width="11" height="1.7" fill="#F6F6F4"/><rect x="20" y="358.1" width="17" height="1.7" fill="#62E884"/><rect x="38" y="358.1" width="1" height="1.7" fill="#F286C4"/><rect x="40" y="358.1" width="8" height="1.7" fill="#F286C4"/><rect x="49" y="358.1" width="2" height="1.7" fill="#F6F6F4"/><rect x="52" y="358.1" width="1" height="1.7" fill="#F6F6F4"/><rect x="8" y="360.1" width="3" height="1.7" fill="#F286C4"/><rect x="12" y="360.1" width="5" height="1.7" fill="#F6F6F4"/><rect x="18" y="360.1" width="1" height="1.7" fill="#F286C4"/><rect x="20" y="360.1" width="4" height="1.7" fill="#BF9EEE"/><rect x="24" y="360.1" width="1" height="1.7" fill="#F6F6F4"/><rect x="8" y="362.1" width="10" height="1.7" fill="#62E884"/><rect x="18" y="362.1" width="1" height="1.7" fill="#F6F6F4"/><rect x="19" y="362.1" width="7" height="1.7" fill="#62E884"/><rect x="26" y="362.1" width="1" height="1.7" fill="#F6F6F4"/><rect x="27" y="362.1" width="8" height="1.7" fill="#F286C4"/><rect x="36" y="362.1" width="2" height="1.7" fill="#F6F6F4"/><rect x="39" y="362.1" width="1" height="1.7" fill="#F6F6F4"/><rect x="12" y="364.1" width="6" height="1.7" fill="#F6F6F4"/><rect x="18" y="364.1" width="5" height="1.7" fill="#62E884"/><rect x="23" y="364.1" width="3" height="1.7" fill="#F6F6F4"/><rect x="12" y="366.1" width="6" height="1.7" fill="#F6F6F4"/><rect x="18" y="366.1" width="17" height="1.7" fill="#62E884"/><rect x="35" y="366.1" width="3" height="1.7" fill="#F6F6F4"/><rect x="8" y="368.1" width="3" height="1.7" fill="#F6F6F4"/><rect x="12" y="368.1" width="4" height="1.7" fill="#BF9EEE"/><rect x="16" y="368.1" width="15" height="1.7" fill="#F6F6F4"/><rect x="4" y="370.1" width="2" height="1.7" fill="#F6F6F4"/><rect x="4" y="372.1" width="5" height="1.7" fill="#97E1F1"/><rect x="9" y="372.1" width="11" height="1.7" fill="#F6F6F4"/><rect x="20" y="372.1" width="23" height="1.7" fill="#62E884"/><rect x="44" y="372.1" width="1" height="1.7" fill="#F286C4"/><rect x="46" y="372.1" width="8" height="1.7" fill="#F286C4"/><rect x="55" y="372.1" width="2" height="1.7" fill="#F6F6F4"/><rect x="58" y="372.1" width="1" height="1.7" fill="#F6F6F4"/><rect x="8" y="374.1" width="3" height="1.7" fill="#F286C4"/><rect x="12" y="374.1" width="5" height="1.7" fill="#F6F6F4"/><rect x="18" y="374.1" width="1" height="1.7" fill="#F286C4"/><rect x="20" y="374.1" width="4" height="1.7" fill="#BF9EEE"/><rect x="24" y="374.1" width="1" height="1.7" fill="#F6F6F4"/><rect x="8" y="376.1" width="3" height="1.7" fill="#6272A4"/><rect x="9" y="378.1" width="1" height="1.7" fill="#6272A4"/><rect x="11" y="378.1" width="4" height="1.7" fill="#6272A4"/><rect x="16" y="378.1" width="11" height="1.7" fill="#6272A4"/><rect x="28" y="378.1" width="8" height="1.7" fill="#6272A4"/><rect x="37" y="378.1" width="3" height="1.7" fill="#6272A4"/><rect x="41" y="378.1" width="10" height="1.7" fill="#6272A4"/><rect x="52" y="378.1" width="2" height="1.7" fill="#6272A4"/><rect x="55" y="378.1" width="2" height="1.7" fill="#6272A4"/><rect x="58" y="378.1" width="12" height="1.7" fill="#6272A4"/><rect x="71" y="378.1" width="4" height="1.7" fill="#6272A4"/><rect x="76" y="378.1" width="6" height="1.7" fill="#6272A4"/><rect x="83" y="378.1" width="8" height="1.7" fill="#6272A4"/><rect x="92" y="378.1" width="6" height="1.7" fill="#6272A4"/><rect x="9" y="380.1" width="2" height="1.7" fill="#6272A4"/><rect x="8" y="382.1" width="2" height="1.7" fill="#6272A4"/><rect x="11" y="382.1" width="10" height="1.7" fill="#6272A4"/><rect x="22" y="382.1" width="4" height="1.7" fill="#6272A4"/><rect x="27" y="382.1" width="8" height="1.7" fill="#6272A4"/><rect x="36" y="382.1" width="2" height="1.7" fill="#6272A4"/><rect x="39" y="382.1" width="3" height="1.7" fill="#6272A4"/><rect x="43" y="382.1" width="6" height="1.7" fill="#6272A4"/><rect x="50" y="382.1" width="7" height="1.7" fill="#6272A4"/><rect x="8" y="384.1" width="2" height="1.7" fill="#F286C4"/><rect x="11" y="384.1" width="1" height="1.7" fill="#F6F6F4"/><rect x="12" y="384.1" width="9" height="1.7" fill="#BF9EEE"/><rect x="21" y="384.1" width="12" height="1.7" fill="#F6F6F4"/><rect x="34" y="384.1" width="1" height="1.7" fill="#F6F6F4"/><rect x="12" y="386.1" width="3" height="1.7" fill="#6272A4"/><rect x="13" y="388.1" width="1" height="1.7" fill="#6272A4"/><rect x="15" y="388.1" width="12" height="1.7" fill="#6272A4"/><rect x="28" y="388.1" width="2" height="1.7" fill="#6272A4"/><rect x="31" y="388.1" width="6" height="1.7" fill="#6272A4"/><rect x="38" y="388.1" width="6" height="1.7" fill="#6272A4"/><rect x="45" y="388.1" width="16" height="1.7" fill="#6272A4"/><rect x="13" y="390.1" width="1" height="1.7" fill="#6272A4"/><rect x="15" y="390.1" width="8" height="1.7" fill="#6272A4"/><rect x="24" y="390.1" width="5" height="1.7" fill="#6272A4"/><rect x="30" y="390.1" width="2" height="1.7" fill="#6272A4"/><rect x="33" y="390.1" width="2" height="1.7" fill="#6272A4"/><rect x="36" y="390.1" width="4" height="1.7" fill="#6272A4"/><rect x="41" y="390.1" width="2" height="1.7" fill="#6272A4"/><rect x="44" y="390.1" width="2" height="1.7" fill="#6272A4"/><rect x="47" y="390.1" width="6" height="1.7" fill="#6272A4"/><rect x="54" y="390.1" width="6" height="1.7" fill="#6272A4"/><rect x="61" y="390.1" width="5" height="1.7" fill="#6272A4"/><rect x="67" y="390.1" width="2" height="1.7" fill="#6272A4"/><rect x="70" y="390.1" width="12" height="1.7" fill="#6272A4"/><rect x="13" y="392.1" width="1" height="1.7" fill="#6272A4"/><rect x="15" y="392.1" width="7" height="1.7" fill="#6272A4"/><rect x="23" y="392.1" width="6" height="1.7" fill="#6272A4"/><rect x="30" y="392.1" width="3" height="1.7" fill="#6272A4"/><rect x="34" y="392.1" width="5" height="1.7" fill="#6272A4"/><rect x="40" y="392.1" width="2" height="1.7" fill="#6272A4"/><rect x="43" y="392.1" width="8" height="1.7" fill="#6272A4"/><rect x="52" y="392.1" width="2" height="1.7" fill="#6272A4"/><rect x="55" y="392.1" width="7" height="1.7" fill="#6272A4"/><rect x="63" y="392.1" width="8" height="1.7" fill="#6272A4"/><rect x="13" y="394.1" width="2" height="1.7" fill="#6272A4"/><rect x="12" y="396.1" width="16" height="1.7" fill="#62E884"/><rect x="28" y="396.1" width="1" height="1.7" fill="#F6F6F4"/><rect x="29" y="396.1" width="6" height="1.7" fill="#BF9EEE"/><rect x="35" y="396.1" width="1" height="1.7" fill="#F6F6F4"/><rect x="37" y="396.1" width="14" height="1.7" fill="#E7EE98"/><rect x="51" y="396.1" width="1" height="1.7" fill="#F6F6F4"/><rect x="53" y="396.1" width="4" height="1.7" fill="#BF9EEE"/><rect x="57" y="396.1" width="23" height="1.7" fill="#F6F6F4"/><rect x="12" y="398.1" width="3" height="1.7" fill="#6272A4"/><rect x="13" y="400.1" width="1" height="1.7" fill="#6272A4"/><rect x="15" y="400.1" width="4" height="1.7" fill="#6272A4"/><rect x="20" y="400.1" width="5" height="1.7" fill="#6272A4"/><rect x="26" y="400.1" width="4" height="1.7" fill="#6272A4"/><rect x="31" y="400.1" width="9" height="1.7" fill="#6272A4"/><rect x="41" y="400.1" width="2" height="1.7" fill="#6272A4"/><rect x="44" y="400.1" width="4" height="1.7" fill="#6272A4"/><rect x="49" y="400.1" width="2" height="1.7" fill="#6272A4"/><rect x="52" y="400.1" width="6" height="1.7" fill="#6272A4"/><rect x="59" y="400.1" width="7" height="1.7" fill="#6272A4"/><rect x="67" y="400.1" width="4" height="1.7" fill="#6272A4"/><rect x="72" y="400.1" width="3" height="1.7" fill="#6272A4"/><rect x="76" y="400.1" width="4" height="1.7" fill="#6272A4"/><rect x="81" y="400.1" width="11" height="1.7" fill="#6272A4"/><rect x="93" y="400.1" width="2" height="1.7" fill="#6272A4"/><rect x="96" y="400.1" width="10" height="1.7" fill="#6272A4"/><rect x="107" y="400.1" width="4" height="1.7" fill="#6272A4"/><rect x="13" y="402.1" width="1" height="1.7" fill="#6272A4"/><rect x="15" y="402.1" width="5" height="1.7" fill="#6272A4"/><rect x="21" y="402.1" width="4" height="1.7" fill="#6272A4"/><rect x="26" y="402.1" width="4" height="1.7" fill="#6272A4"/><rect x="31" y="402.1" width="8" height="1.7" fill="#6272A4"/><rect x="40" y="402.1" width="2" height="1.7" fill="#6272A4"/><rect x="43" y="402.1" width="1" height="1.7" fill="#6272A4"/><rect x="45" y="402.1" width="9" height="1.7" fill="#6272A4"/><rect x="55" y="402.1" width="12" height="1.7" fill="#6272A4"/><rect x="68" y="402.1" width="4" height="1.7" fill="#6272A4"/><rect x="73" y="402.1" width="2" height="1.7" fill="#6272A4"/><rect x="76" y="402.1" width="11" height="1.7" fill="#6272A4"/><rect x="88" y="402.1" width="5" height="1.7" fill="#6272A4"/><rect x="94" y="402.1" width="2" height="1.7" fill="#6272A4"/><rect x="97" y="402.1" width="2" height="1.7" fill="#6272A4"/><rect x="100" y="402.1" width="5" height="1.7" fill="#6272A4"/><rect x="106" y="402.1" width="5" height="1.7" fill="#6272A4"/><rect x="13" y="404.1" width="2" height="1.7" fill="#6272A4"/><rect x="12" y="406.1" width="16" height="1.7" fill="#62E884"/><rect x="28" y="406.1" width="1" height="1.7" fill="#F6F6F4"/><rect x="29" y="406.1" width="8" height="1.7" fill="#BF9EEE"/><rect x="37" y="406.1" width="1" height="1.7" fill="#F6F6F4"/><rect x="39" y="406.1" width="18" height="1.7" fill="#E7EE98"/><rect x="57" y="406.1" width="1" height="1.7" fill="#F6F6F4"/><rect x="59" y="406.1" width="8" height="1.7" fill="#F286C4"/><rect x="68" y="406.1" width="2" height="1.7" fill="#F6F6F4"/><rect x="71" y="406.1" width="1" height="1.7" fill="#F6F6F4"/><rect x="16" y="408.1" width="2" height="1.7" fill="#F286C4"/><rect x="19" y="408.1" width="1" height="1.7" fill="#F6F6F4"/><rect x="20" y="408.1" width="8" height="1.7" fill="#BF9EEE"/><rect x="28" y="408.1" width="16" height="1.7" fill="#F6F6F4"/><rect x="45" y="408.1" width="3" height="1.7" fill="#F286C4"/><rect x="49" y="408.1" width="8" height="1.7" fill="#E7EE98"/><rect x="57" y="408.1" width="1" height="1.7" fill="#F6F6F4"/><rect x="59" y="408.1" width="1" height="1.7" fill="#F6F6F4"/><rect x="20" y="410.1" width="6" height="1.7" fill="#F6F6F4"/><rect x="26" y="410.1" width="5" height="1.7" fill="#62E884"/><rect x="31" y="410.1" width="3" height="1.7" fill="#F6F6F4"/><rect x="16" y="412.1" width="1" height="1.7" fill="#F6F6F4"/><rect x="12" y="414.1" width="3" height="1.7" fill="#F6F6F4"/><rect x="12" y="416.1" width="3" height="1.7" fill="#6272A4"/><rect x="13" y="418.1" width="1" height="1.7" fill="#6272A4"/><rect x="15" y="418.1" width="6" height="1.7" fill="#6272A4"/><rect x="22" y="418.1" width="4" height="1.7" fill="#6272A4"/><rect x="27" y="418.1" width="3" height="1.7" fill="#6272A4"/><rect x="31" y="418.1" width="7" height="1.7" fill="#6272A4"/><rect x="39" y="418.1" width="3" height="1.7" fill="#6272A4"/><rect x="43" y="418.1" width="2" height="1.7" fill="#6272A4"/><rect x="46" y="418.1" width="4" height="1.7" fill="#6272A4"/><rect x="51" y="418.1" width="1" height="1.7" fill="#6272A4"/><rect x="53" y="418.1" width="7" height="1.7" fill="#6272A4"/><rect x="61" y="418.1" width="7" height="1.7" fill="#6272A4"/><rect x="13" y="420.1" width="1" height="1.7" fill="#6272A4"/><rect x="15" y="420.1" width="1" height="1.7" fill="#6272A4"/><rect x="17" y="420.1" width="1" height="1.7" fill="#6272A4"/><rect x="19" y="420.1" width="10" height="1.7" fill="#6272A4"/><rect x="30" y="420.1" width="6" height="1.7" fill="#6272A4"/><rect x="37" y="420.1" width="6" height="1.7" fill="#6272A4"/><rect x="44" y="420.1" width="3" height="1.7" fill="#6272A4"/><rect x="48" y="420.1" width="6" height="1.7" fill="#6272A4"/><rect x="55" y="420.1" width="4" height="1.7" fill="#6272A4"/><rect x="60" y="420.1" width="47" height="1.7" fill="#6272A4"/><rect x="13" y="422.1" width="1" height="1.7" fill="#6272A4"/><rect x="15" y="422.1" width="1" height="1.7" fill="#6272A4"/><rect x="17" y="422.1" width="1" height="1.7" fill="#6272A4"/><rect x="19" y="422.1" width="4" height="1.7" fill="#6272A4"/><rect x="24" y="422.1" width="4" height="1.7" fill="#6272A4"/><rect x="29" y="422.1" width="10" height="1.7" fill="#6272A4"/><rect x="40" y="422.1" width="4" height="1.7" fill="#6272A4"/><rect x="45" y="422.1" width="47" height="1.7" fill="#6272A4"/><rect x="13" y="424.1" width="2" height="1.7" fill="#6272A4"/><rect x="12" y="426.1" width="16" height="1.7" fill="#62E884"/><rect x="28" y="426.1" width="1" height="1.7" fill="#F6F6F4"/><rect x="29" y="426.1" width="6" height="1.7" fill="#BF9EEE"/><rect x="35" y="426.1" width="1" height="1.7" fill="#F6F6F4"/><rect x="37" y="426.1" width="14" height="1.7" fill="#E7EE98"/><rect x="51" y="426.1" width="1" height="1.7" fill="#F6F6F4"/><rect x="53" y="426.1" width="8" height="1.7" fill="#F286C4"/><rect x="62" y="426.1" width="2" height="1.7" fill="#F6F6F4"/><rect x="65" y="426.1" width="1" height="1.7" fill="#F6F6F4"/><rect x="67" y="426.1" width="6" height="1.7" fill="#F286C4"/><rect x="74" y="426.1" width="6" height="1.7" fill="#F6F6F4"/><rect x="80" y="426.1" width="5" height="1.7" fill="#62E884"/><rect x="85" y="426.1" width="3" height="1.7" fill="#F6F6F4"/><rect x="89" y="426.1" width="3" height="1.7" fill="#F6F6F4"/><rect x="8" y="428.1" width="1" height="1.7" fill="#F6F6F4"/><rect x="4" y="430.1" width="2" height="1.7" fill="#F6F6F4"/><rect x="4" y="432.1" width="6" height="1.7" fill="#F286C4"/><rect x="11" y="432.1" width="5" height="1.7" fill="#97E1F1"/><rect x="16" y="432.1" width="1" height="1.7" fill="#F6F6F4"/><rect x="0" y="434.1" width="5" height="1.7" fill="#F6F6F4"/><rect x="0" y="436.1" width="6" height="1.7" fill="#F286C4"/><rect x="7" y="436.1" width="1" height="1.7" fill="#F6F6F4"/><rect x="9" y="436.1" width="5" height="1.7" fill="#97E1F1"/><rect x="15" y="436.1" width="2" height="1.7" fill="#F6F6F4"/><rect x="0" y="438.1" width="3" height="1.7" fill="#6272A4"/><rect x="4" y="438.1" width="33" height="1.7" fill="#6272A4"/></g><rect x="0" y="208" width="111" height="6" fill="#244a72"/><rect x="12" y="208" width="56" height="2" fill="#2f5a88"/><rect x="0" y="210" width="111" height="2" fill="#2f5a88"/><rect x="0" y="212" width="26" height="2" fill="#2f5a88"/></svg></div>
<div id="sbline" class="abs"></div>
<div id="slider" class="abs"></div>
<div id="cursormark" class="abs"></div>
</body></html>
